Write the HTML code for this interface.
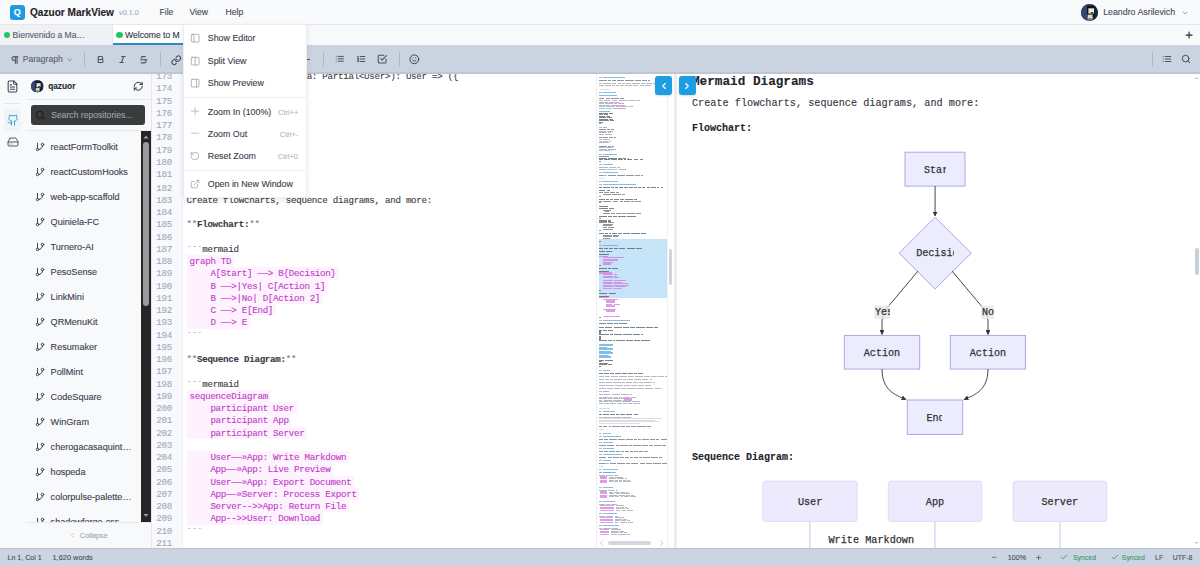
<!DOCTYPE html>
<html><head><meta charset="utf-8">
<style>
*{margin:0;padding:0;box-sizing:border-box}
html,body{width:1200px;height:566px;overflow:hidden;background:#fff;font-family:"Liberation Sans",sans-serif;position:relative}
.a{position:absolute}
.t{position:absolute;line-height:0;white-space:pre;-webkit-text-stroke:0.12px currentColor}
svg{position:absolute;overflow:visible}
</style></head><body>
<div class="a" style="left:0px;top:0px;width:1200px;height:24px;background:#f9fafb;"></div>
<div class="a" style="left:0px;top:24px;width:1200px;height:1px;background:#e5e7eb;"></div>
<div class="a" style="left:0px;top:25px;width:1200px;height:19.8px;background:#f8f9fb;"></div>
<div class="a" style="left:0px;top:25px;width:112px;height:19.8px;background:#eff1f5;"></div>
<div class="a" style="left:112px;top:25px;width:0.8px;height:19.8px;background:#e2e5ea;"></div>
<div class="a" style="left:112.8px;top:25px;width:71px;height:19.8px;background:#ffffff;"></div>
<div class="a" style="left:112.8px;top:43.3px;width:71px;height:1.7px;background:#2a8acb;"></div>
<div class="a" style="left:0px;top:45px;width:1200px;height:27.5px;background:#cad3df;"></div>
<div class="a" style="left:0px;top:72px;width:1200px;height:1.8px;background:#bdc7d3;"></div>
<div class="a" style="left:0px;top:73.8px;width:25.5px;height:474.2px;background:#f8f9fb;"></div>
<div class="a" style="left:25.5px;top:73.8px;width:0.8px;height:474.2px;background:#e5e7eb;"></div>
<div class="a" style="left:26.3px;top:73.8px;width:124.5px;height:474.2px;background:#f8f9fb;"></div>
<div class="a" style="left:150.8px;top:73.8px;width:0.8px;height:474.2px;background:#e3e6ea;"></div>
<div class="a" style="left:151.6px;top:73.8px;width:30.2px;height:474.2px;background:#f8f9fc;"></div>
<div class="a" style="left:181.8px;top:73.8px;width:0.8px;height:474.2px;background:#eef0f3;"></div>
<div class="a" style="left:182.6px;top:73.8px;width:413.4px;height:474.2px;background:#ffffff;"></div>
<div class="a" style="left:596px;top:73.8px;width:78px;height:474.2px;background:#ffffff;"></div>
<div class="a" style="left:596px;top:73.8px;width:0.8px;height:474.2px;background:#eceef2;"></div>
<div class="a" style="left:674px;top:73.8px;width:3px;height:474.2px;background:#e9ecf1;"></div>
<div class="a" style="left:677px;top:73.8px;width:523px;height:474.2px;background:#ffffff;"></div>
<div class="a" style="left:0px;top:548px;width:1200px;height:18px;background:#cbd5e1;"></div>
<div class="a" style="left:0px;top:547.6px;width:1200px;height:0.8px;background:#b8c3d1;"></div>
<div class="a" style="left:10px;top:5px;width:15px;height:15px;background:#1d9be2;border-radius:3px"></div>
<div class="t" style="left:13.8px;top:12.4px;font-size:9px;color:#ffffff;font-weight:bold;">Q</div>
<div class="t" style="left:30px;top:12.9px;font-size:10.1px;color:#1f2328;font-weight:bold;">Qazuor MarkView</div>
<div class="t" style="left:119px;top:13.2px;font-size:7.3px;color:#a9aeb6;">v0.1.0</div>
<div class="t" style="left:159.5px;top:12.2px;font-size:8.6px;color:#454b55;">File</div>
<div class="t" style="left:189.5px;top:12.2px;font-size:8.6px;color:#454b55;">View</div>
<div class="t" style="left:225.5px;top:12.2px;font-size:8.6px;color:#454b55;">Help</div>
<svg style="left:1081px;top:3.8px" width="17" height="17" viewBox="0 0 17 17"><defs><clipPath id="avch"><circle cx="8.5" cy="8.5" r="8.5"/></clipPath></defs><g clip-path="url(#avch)"><rect width="17" height="17" fill="#27365a"/><rect x="0" y="0" width="6" height="17" fill="#34456e"/><rect x="11" y="0" width="6" height="17" fill="#1c2744"/><rect x="6" y="2" width="7.5" height="11" fill="#0e1220"/><rect x="7.4" y="4.3" width="5.6" height="5.2" fill="#efe9d2"/><rect x="9.8" y="8" width="2.4" height="2.6" fill="#504a48"/><rect x="6.6" y="10.6" width="5" height="4.8" fill="#ddd9c0"/><rect x="7.5" y="14" width="3" height="3" fill="#6c7a8c"/></g></svg>
<div class="t" style="left:1103.2px;top:12.2px;font-size:8.8px;color:#454b55;">Leandro Asrilevich</div>
<svg style="left:1181px;top:8.5px;" width="8" height="8" viewBox="0 0 24 24" fill="none" stroke="#6b7280" stroke-width="2" stroke-linecap="round" stroke-linejoin="round"><path d="m6 9 6 6 6-6"/></svg>
<div class="a" style="left:3.7px;top:31.8px;width:6.4px;height:6.4px;background:#22c55e;border-radius:50%"></div>
<div class="t" style="left:12.5px;top:35px;font-size:8.6px;color:#5a606b;">Bienvenido a Ma…</div>
<div class="a" style="left:116px;top:31.8px;width:6.6px;height:6.4px;background:#22c55e;border-radius:50%"></div>
<div class="t" style="left:125px;top:35px;font-size:8.6px;color:#2f3540;">Welcome to M</div>
<svg style="left:1183.8px;top:29.8px;" width="10.2" height="10.2" viewBox="0 0 24 24" fill="none" stroke="#1f2937" stroke-width="2.6" stroke-linecap="round" stroke-linejoin="round"><path d="M5 12h14"/><path d="M12 5v14"/></svg>
<svg style="left:10.3px;top:54.5px;" width="10" height="10" viewBox="0 0 24 24" fill="none" stroke="#5a6270" stroke-width="3" stroke-linecap="round" stroke-linejoin="round"><path d="M13 4v16"/><path d="M17 4v16"/><path d="M19 4H9.5a4.5 4.5 0 0 0 0 9H13"/></svg>
<div class="t" style="left:22.7px;top:59.2px;font-size:8.6px;color:#5a6270;">Paragraph</div>
<svg style="left:66px;top:55.5px;" width="7.5" height="7.5" viewBox="0 0 24 24" fill="none" stroke="#5a6270" stroke-width="2.2" stroke-linecap="round" stroke-linejoin="round"><path d="m6 9 6 6 6-6"/></svg>
<div class="a" style="left:84.3px;top:52.2px;width:0.9px;height:14.5px;background:#aeb7c3;"></div>
<svg style="left:96.1px;top:55.1px;" width="9" height="9" viewBox="0 0 24 24" fill="none" stroke="#4b5362" stroke-width="2.9" stroke-linecap="round" stroke-linejoin="round"><path d="M6 12h9a4 4 0 0 1 0 8H7a1 1 0 0 1-1-1V5a1 1 0 0 1 1-1h7a4 4 0 0 1 0 8"/></svg>
<svg style="left:117.5px;top:55.1px;" width="9" height="9" viewBox="0 0 24 24" fill="none" stroke="#4b5362" stroke-width="2.9" stroke-linecap="round" stroke-linejoin="round"><line x1="19" x2="10" y1="4" y2="4"/><line x1="14" x2="5" y1="20" y2="20"/><line x1="15" x2="9" y1="4" y2="20"/></svg>
<svg style="left:138.8px;top:55px;" width="9.5" height="9.5" viewBox="0 0 24 24" fill="none" stroke="#4b5362" stroke-width="2.8" stroke-linecap="round" stroke-linejoin="round"><path d="M16 4H9a3 3 0 0 0-2.83 4"/><path d="M14 12a4 4 0 0 1 0 8H6"/><line x1="4" x2="20" y1="12" y2="12"/></svg>
<div class="a" style="left:160px;top:52.2px;width:0.9px;height:14.5px;background:#aeb7c3;"></div>
<svg style="left:170.5px;top:54.6px;" width="10.5" height="10.5" viewBox="0 0 24 24" fill="none" stroke="#4b5362" stroke-width="2.5" stroke-linecap="round" stroke-linejoin="round"><path d="M10 13a5 5 0 0 0 7.54.54l3-3a5 5 0 0 0-7.07-7.07l-1.72 1.71"/><path d="M14 11a5 5 0 0 0-7.54-.54l-3 3a5 5 0 0 0 7.07 7.07l1.71-1.71"/></svg>
<div class="a" style="left:306.5px;top:58.6px;width:3.5px;height:1.1px;background:#4b5362;"></div>
<div class="a" style="left:323px;top:52.2px;width:0.9px;height:14.5px;background:#aeb7c3;"></div>
<svg style="left:335.2px;top:53.8px;" width="9.6" height="9.6" viewBox="0 0 24 24" fill="none" stroke="#4b5362" stroke-width="2.5" stroke-linecap="round" stroke-linejoin="round"><path d="M3 12h.01"/><path d="M3 18h.01"/><path d="M3 6h.01"/><path d="M8 12h13"/><path d="M8 18h13"/><path d="M8 6h13"/></svg>
<svg style="left:356px;top:53.6px;" width="10" height="10" viewBox="0 0 24 24" fill="none" stroke="#4b5362" stroke-width="2.5" stroke-linecap="round" stroke-linejoin="round"><path d="M10 12h11"/><path d="M10 18h11"/><path d="M10 6h11"/><path d="M4 10h2"/><path d="M4 6h1v4"/><path d="M6 18H4c0-1 2-2 2-3s-1-1.5-2-1"/></svg>
<svg style="left:377.1px;top:54.4px;" width="10.3" height="10.3" viewBox="0 0 24 24" fill="none" stroke="#4b5362" stroke-width="2.5" stroke-linecap="round" stroke-linejoin="round"><path d="m9 11 3 3L22 4"/><path d="M21 12v7a2 2 0 0 1-2 2H5a2 2 0 0 1-2-2V5a2 2 0 0 1 2-2h11"/></svg>
<div class="a" style="left:399px;top:52.2px;width:0.9px;height:14.5px;background:#aeb7c3;"></div>
<svg style="left:408.9px;top:54.2px;" width="10.6" height="10.6" viewBox="0 0 24 24" fill="none" stroke="#374151" stroke-width="2.2" stroke-linecap="round" stroke-linejoin="round"><circle cx="12" cy="12" r="10"/><path d="M8 14s1.5 2 4 2 4-2 4-2"/><line x1="9" x2="9.01" y1="9" y2="9"/><line x1="15" x2="15.01" y1="9" y2="9"/></svg>
<div class="a" style="left:1151.6px;top:52.2px;width:0.9px;height:15px;background:#aeb7c3;"></div>
<svg style="left:1162.2px;top:54.4px;" width="10" height="10" viewBox="0 0 24 24" fill="none" stroke="#4b5362" stroke-width="2.5" stroke-linecap="round" stroke-linejoin="round"><path d="M3 12h.01"/><path d="M3 18h.01"/><path d="M3 6h.01"/><path d="M8 12h13"/><path d="M8 18h13"/><path d="M8 6h13"/></svg>
<svg style="left:1181.2px;top:54.1px;" width="10" height="10" viewBox="0 0 24 24" fill="none" stroke="#374151" stroke-width="2.2" stroke-linecap="round" stroke-linejoin="round"><circle cx="11" cy="11" r="8"/><path d="m21 21-4.3-4.3"/></svg>
<svg style="left:5.8px;top:79.9px;" width="13" height="13" viewBox="0 0 24 24" fill="none" stroke="#374151" stroke-width="1.9" stroke-linecap="round" stroke-linejoin="round"><path d="M15 2H6a2 2 0 0 0-2 2v16a2 2 0 0 0 2 2h12a2 2 0 0 0 2-2V7Z"/><path d="M14 2v4a2 2 0 0 0 2 2h4"/><path d="M10 9H8"/><path d="M16 13H8"/><path d="M16 17H8"/></svg>
<div class="a" style="left:4.2px;top:103.3px;width:15.6px;height:0.8px;background:#e3e6ea;"></div>
<div class="a" style="left:3.5px;top:108.6px;width:17.7px;height:22px;background:#f1f3f6;border-radius:4px"></div>
<svg style="left:7.3px;top:113.5px;" width="12" height="12" viewBox="0 0 24 24" fill="none" stroke="#1d9be2" stroke-width="1.9" stroke-linecap="round" stroke-linejoin="round"><path d="M15 22v-4a4.8 4.8 0 0 0-1-3.5c3 0 6-2 6-5.5.08-1.25-.27-2.48-1-3.5.28-1.15.28-2.35 0-3.5 0 0-1 0-3 1.5-2.64-.5-5.36-.5-8 0C6 2 5 2 5 2c-.3 1.15-.3 2.35 0 3.5A5.403 5.403 0 0 0 4 9c0 3.5 3 5.5 6 5.5-.39.49-.68 1.05-.85 1.65-.17.6-.22 1.23-.15 1.85v4"/><path d="M9 18c-4.51 2-5-2-7-2"/></svg>
<svg style="left:6.5px;top:135.5px;" width="12" height="12" viewBox="0 0 24 24" fill="none" stroke="#374151" stroke-width="1.7" stroke-linecap="round" stroke-linejoin="round"><line x1="22" x2="2" y1="12" y2="12"/><path d="M5.45 5.11 2 12v6a2 2 0 0 0 2 2h16a2 2 0 0 0 2-2v-6l-3.45-6.89A2 2 0 0 0 16.76 4H7.24a2 2 0 0 0-1.79 1.11z"/><line x1="6" x2="6.01" y1="16" y2="16"/><line x1="10" x2="10.01" y1="16" y2="16"/></svg>
<svg style="left:30.5px;top:79.9px" width="12.5" height="12.5" viewBox="0 0 17 17"><defs><clipPath id="avcs"><circle cx="8.5" cy="8.5" r="8.5"/></clipPath></defs><g clip-path="url(#avcs)"><rect width="17" height="17" fill="#27365a"/><rect x="0" y="0" width="6" height="17" fill="#34456e"/><rect x="11" y="0" width="6" height="17" fill="#1c2744"/><rect x="6" y="2" width="7.5" height="11" fill="#0e1220"/><rect x="7.4" y="4.3" width="5.6" height="5.2" fill="#efe9d2"/><rect x="9.8" y="8" width="2.4" height="2.6" fill="#504a48"/><rect x="6.6" y="10.6" width="5" height="4.8" fill="#ddd9c0"/><rect x="7.5" y="14" width="3" height="3" fill="#6c7a8c"/></g></svg>
<div class="t" style="left:48.2px;top:86px;font-size:8.3px;color:#1f2937;font-weight:bold;">qazuor</div>
<svg style="left:132.7px;top:81.1px;" width="10.5" height="10.5" viewBox="0 0 24 24" fill="none" stroke="#1f2937" stroke-width="2.2" stroke-linecap="round" stroke-linejoin="round"><path d="M3 12a9 9 0 0 1 9-9 9.75 9.75 0 0 1 6.74 2.74L21 8"/><path d="M21 3v5h-5"/><path d="M21 12a9 9 0 0 1-9 9 9.75 9.75 0 0 1-6.74-2.74L3 16"/><path d="M8 16H3v5"/></svg>
<div class="a" style="left:26.3px;top:98.6px;width:124.5px;height:0.8px;background:#e6e8ec;"></div>
<div class="a" style="left:31.3px;top:105px;width:113.7px;height:19.9px;background:#3a3b3d;border-radius:3px"></div>
<svg style="left:34.95px;top:109.8px;" width="10.4" height="10.4" viewBox="0 0 24 24" fill="none" stroke="#1f1f1f" stroke-width="2.4" stroke-linecap="round" stroke-linejoin="round"><circle cx="11" cy="11" r="8"/><path d="m21 21-4.3-4.3"/></svg>
<div class="t" style="left:51.2px;top:115.3px;font-size:8.6px;color:#9ea2a8;">Search repositories...</div>
<div class="a" style="left:26.3px;top:130.2px;width:124.5px;height:0.8px;background:#e6e8ec;"></div>
<div class="a" style="left:26.3px;top:131px;width:124.5px;height:391.5px;overflow:hidden"><div class="a" style="left:-26.3px;top:-131px;width:1200px;height:600px"><svg style="left:35.3px;top:142.35px;" width="10" height="10" viewBox="0 0 24 24" fill="none" stroke="#374151" stroke-width="2.3" stroke-linecap="round" stroke-linejoin="round"><line x1="6" x2="6" y1="3" y2="15"/><circle cx="18" cy="6" r="3"/><circle cx="6" cy="18" r="3"/><path d="M18 9a9 9 0 0 1-9 9"/></svg>
<div class="t" style="left:50.6px;top:147.3px;font-size:9.1px;color:#3a414d;">reactFormToolkit</div>
<svg style="left:35.3px;top:167.35px;" width="10" height="10" viewBox="0 0 24 24" fill="none" stroke="#374151" stroke-width="2.3" stroke-linecap="round" stroke-linejoin="round"><line x1="6" x2="6" y1="3" y2="15"/><circle cx="18" cy="6" r="3"/><circle cx="6" cy="18" r="3"/><path d="M18 9a9 9 0 0 1-9 9"/></svg>
<div class="t" style="left:50.6px;top:172.3px;font-size:9.1px;color:#3a414d;">reactCustomHooks</div>
<svg style="left:35.3px;top:192.35px;" width="10" height="10" viewBox="0 0 24 24" fill="none" stroke="#374151" stroke-width="2.3" stroke-linecap="round" stroke-linejoin="round"><line x1="6" x2="6" y1="3" y2="15"/><circle cx="18" cy="6" r="3"/><circle cx="6" cy="18" r="3"/><path d="M18 9a9 9 0 0 1-9 9"/></svg>
<div class="t" style="left:50.6px;top:197.3px;font-size:9.1px;color:#3a414d;">web-app-scaffold</div>
<svg style="left:35.3px;top:217.35px;" width="10" height="10" viewBox="0 0 24 24" fill="none" stroke="#374151" stroke-width="2.3" stroke-linecap="round" stroke-linejoin="round"><line x1="6" x2="6" y1="3" y2="15"/><circle cx="18" cy="6" r="3"/><circle cx="6" cy="18" r="3"/><path d="M18 9a9 9 0 0 1-9 9"/></svg>
<div class="t" style="left:50.6px;top:222.3px;font-size:9.1px;color:#3a414d;">Quiniela-FC</div>
<svg style="left:35.3px;top:242.35px;" width="10" height="10" viewBox="0 0 24 24" fill="none" stroke="#374151" stroke-width="2.3" stroke-linecap="round" stroke-linejoin="round"><line x1="6" x2="6" y1="3" y2="15"/><circle cx="18" cy="6" r="3"/><circle cx="6" cy="18" r="3"/><path d="M18 9a9 9 0 0 1-9 9"/></svg>
<div class="t" style="left:50.6px;top:247.3px;font-size:9.1px;color:#3a414d;">Turnero-AI</div>
<svg style="left:35.3px;top:267.35px;" width="10" height="10" viewBox="0 0 24 24" fill="none" stroke="#374151" stroke-width="2.3" stroke-linecap="round" stroke-linejoin="round"><line x1="6" x2="6" y1="3" y2="15"/><circle cx="18" cy="6" r="3"/><circle cx="6" cy="18" r="3"/><path d="M18 9a9 9 0 0 1-9 9"/></svg>
<div class="t" style="left:50.6px;top:272.3px;font-size:9.1px;color:#3a414d;">PesoSense</div>
<svg style="left:35.3px;top:292.35px;" width="10" height="10" viewBox="0 0 24 24" fill="none" stroke="#374151" stroke-width="2.3" stroke-linecap="round" stroke-linejoin="round"><line x1="6" x2="6" y1="3" y2="15"/><circle cx="18" cy="6" r="3"/><circle cx="6" cy="18" r="3"/><path d="M18 9a9 9 0 0 1-9 9"/></svg>
<div class="t" style="left:50.6px;top:297.3px;font-size:9.1px;color:#3a414d;">LinkMini</div>
<svg style="left:35.3px;top:317.35px;" width="10" height="10" viewBox="0 0 24 24" fill="none" stroke="#374151" stroke-width="2.3" stroke-linecap="round" stroke-linejoin="round"><line x1="6" x2="6" y1="3" y2="15"/><circle cx="18" cy="6" r="3"/><circle cx="6" cy="18" r="3"/><path d="M18 9a9 9 0 0 1-9 9"/></svg>
<div class="t" style="left:50.6px;top:322.3px;font-size:9.1px;color:#3a414d;">QRMenuKit</div>
<svg style="left:35.3px;top:342.35px;" width="10" height="10" viewBox="0 0 24 24" fill="none" stroke="#374151" stroke-width="2.3" stroke-linecap="round" stroke-linejoin="round"><line x1="6" x2="6" y1="3" y2="15"/><circle cx="18" cy="6" r="3"/><circle cx="6" cy="18" r="3"/><path d="M18 9a9 9 0 0 1-9 9"/></svg>
<div class="t" style="left:50.6px;top:347.3px;font-size:9.1px;color:#3a414d;">Resumaker</div>
<svg style="left:35.3px;top:367.35px;" width="10" height="10" viewBox="0 0 24 24" fill="none" stroke="#374151" stroke-width="2.3" stroke-linecap="round" stroke-linejoin="round"><line x1="6" x2="6" y1="3" y2="15"/><circle cx="18" cy="6" r="3"/><circle cx="6" cy="18" r="3"/><path d="M18 9a9 9 0 0 1-9 9"/></svg>
<div class="t" style="left:50.6px;top:372.3px;font-size:9.1px;color:#3a414d;">PollMint</div>
<svg style="left:35.3px;top:392.35px;" width="10" height="10" viewBox="0 0 24 24" fill="none" stroke="#374151" stroke-width="2.3" stroke-linecap="round" stroke-linejoin="round"><line x1="6" x2="6" y1="3" y2="15"/><circle cx="18" cy="6" r="3"/><circle cx="6" cy="18" r="3"/><path d="M18 9a9 9 0 0 1-9 9"/></svg>
<div class="t" style="left:50.6px;top:397.3px;font-size:9.1px;color:#3a414d;">CodeSquare</div>
<svg style="left:35.3px;top:417.35px;" width="10" height="10" viewBox="0 0 24 24" fill="none" stroke="#374151" stroke-width="2.3" stroke-linecap="round" stroke-linejoin="round"><line x1="6" x2="6" y1="3" y2="15"/><circle cx="18" cy="6" r="3"/><circle cx="6" cy="18" r="3"/><path d="M18 9a9 9 0 0 1-9 9"/></svg>
<div class="t" style="left:50.6px;top:422.3px;font-size:9.1px;color:#3a414d;">WinGram</div>
<svg style="left:35.3px;top:442.35px;" width="10" height="10" viewBox="0 0 24 24" fill="none" stroke="#374151" stroke-width="2.3" stroke-linecap="round" stroke-linejoin="round"><line x1="6" x2="6" y1="3" y2="15"/><circle cx="18" cy="6" r="3"/><circle cx="6" cy="18" r="3"/><path d="M18 9a9 9 0 0 1-9 9"/></svg>
<div class="t" style="left:50.6px;top:447.3px;font-size:9.1px;color:#3a414d;">cherogacasaquint…</div>
<svg style="left:35.3px;top:467.35px;" width="10" height="10" viewBox="0 0 24 24" fill="none" stroke="#374151" stroke-width="2.3" stroke-linecap="round" stroke-linejoin="round"><line x1="6" x2="6" y1="3" y2="15"/><circle cx="18" cy="6" r="3"/><circle cx="6" cy="18" r="3"/><path d="M18 9a9 9 0 0 1-9 9"/></svg>
<div class="t" style="left:50.6px;top:472.3px;font-size:9.1px;color:#3a414d;">hospeda</div>
<svg style="left:35.3px;top:492.35px;" width="10" height="10" viewBox="0 0 24 24" fill="none" stroke="#374151" stroke-width="2.3" stroke-linecap="round" stroke-linejoin="round"><line x1="6" x2="6" y1="3" y2="15"/><circle cx="18" cy="6" r="3"/><circle cx="6" cy="18" r="3"/><path d="M18 9a9 9 0 0 1-9 9"/></svg>
<div class="t" style="left:50.6px;top:497.3px;font-size:9.1px;color:#3a414d;">colorpulse-palette…</div>
<svg style="left:35.3px;top:517.35px;" width="10" height="10" viewBox="0 0 24 24" fill="none" stroke="#374151" stroke-width="2.3" stroke-linecap="round" stroke-linejoin="round"><line x1="6" x2="6" y1="3" y2="15"/><circle cx="18" cy="6" r="3"/><circle cx="6" cy="18" r="3"/><path d="M18 9a9 9 0 0 1-9 9"/></svg>
<div class="t" style="left:50.6px;top:522.3px;font-size:9.1px;color:#3a414d;">shadowforge-css</div>
</div></div>
<div class="a" style="left:141px;top:131.3px;width:9.75px;height:390.4px;background:#262626;"></div>
<svg style="left:141px;top:131.3px" width="10" height="390" viewBox="0 0 10 390"><path d="M2.6 7.4 L5 4.6 L7.4 7.4Z" fill="#a8a8a8"/><path d="M2.6 383 L5 385.8 L7.4 383Z" fill="#a8a8a8"/></svg>
<div class="a" style="left:142.6px;top:142px;width:6.6px;height:164px;background:#9b9b9b;border-radius:3.3px"></div>
<div class="a" style="left:26.3px;top:522.2px;width:124.5px;height:0.8px;background:#e6e8ec;"></div>
<svg style="left:69.2px;top:531.8px;" width="7" height="7" viewBox="0 0 24 24" fill="none" stroke="#a3a8b0" stroke-width="2.2" stroke-linecap="round" stroke-linejoin="round"><path d="m15 18-6-6 6-6"/></svg>
<div class="t" style="left:79.7px;top:535.6px;font-size:7.2px;color:#a3a8b0;">Collapse</div>
<div class="a" style="left:0;top:73.8px;width:1200px;height:474.2px;overflow:hidden"><div class="a" style="left:0;top:-73.8px;width:1200px;height:566px"><div class="t" style="left:156.3px;top:77.1px;font-size:9.2px;color:#a4a9b8;font-family:'Liberation Mono',monospace;letter-spacing:-0.29px;">173</div>
<div class="t" style="left:156.3px;top:89.35px;font-size:9.2px;color:#a4a9b8;font-family:'Liberation Mono',monospace;letter-spacing:-0.29px;">174</div>
<div class="t" style="left:156.3px;top:101.6px;font-size:9.2px;color:#a4a9b8;font-family:'Liberation Mono',monospace;letter-spacing:-0.29px;">175</div>
<div class="t" style="left:156.3px;top:113.85px;font-size:9.2px;color:#a4a9b8;font-family:'Liberation Mono',monospace;letter-spacing:-0.29px;">176</div>
<div class="t" style="left:156.3px;top:126.1px;font-size:9.2px;color:#a4a9b8;font-family:'Liberation Mono',monospace;letter-spacing:-0.29px;">177</div>
<div class="t" style="left:156.3px;top:138.35px;font-size:9.2px;color:#a4a9b8;font-family:'Liberation Mono',monospace;letter-spacing:-0.29px;">178</div>
<div class="t" style="left:156.3px;top:150.6px;font-size:9.2px;color:#a4a9b8;font-family:'Liberation Mono',monospace;letter-spacing:-0.29px;">179</div>
<div class="t" style="left:156.3px;top:162.85px;font-size:9.2px;color:#a4a9b8;font-family:'Liberation Mono',monospace;letter-spacing:-0.29px;">180</div>
<div class="t" style="left:156.3px;top:175.1px;font-size:9.2px;color:#a4a9b8;font-family:'Liberation Mono',monospace;letter-spacing:-0.29px;">181</div>
<div class="t" style="left:156.3px;top:188.7px;font-size:9.2px;color:#a4a9b8;font-family:'Liberation Mono',monospace;letter-spacing:-0.29px;">182</div>
<div class="t" style="left:156.3px;top:200.95px;font-size:9.2px;color:#a4a9b8;font-family:'Liberation Mono',monospace;letter-spacing:-0.29px;">183</div>
<div class="t" style="left:156.3px;top:213.2px;font-size:9.2px;color:#a4a9b8;font-family:'Liberation Mono',monospace;letter-spacing:-0.29px;">184</div>
<div class="t" style="left:156.3px;top:225.45px;font-size:9.2px;color:#a4a9b8;font-family:'Liberation Mono',monospace;letter-spacing:-0.29px;">185</div>
<div class="t" style="left:156.3px;top:237.7px;font-size:9.2px;color:#a4a9b8;font-family:'Liberation Mono',monospace;letter-spacing:-0.29px;">186</div>
<div class="t" style="left:156.3px;top:249.95px;font-size:9.2px;color:#a4a9b8;font-family:'Liberation Mono',monospace;letter-spacing:-0.29px;">187</div>
<div class="t" style="left:156.3px;top:262.2px;font-size:9.2px;color:#a4a9b8;font-family:'Liberation Mono',monospace;letter-spacing:-0.29px;">188</div>
<div class="t" style="left:156.3px;top:274.45px;font-size:9.2px;color:#a4a9b8;font-family:'Liberation Mono',monospace;letter-spacing:-0.29px;">189</div>
<div class="t" style="left:156.3px;top:286.7px;font-size:9.2px;color:#a4a9b8;font-family:'Liberation Mono',monospace;letter-spacing:-0.29px;">190</div>
<div class="t" style="left:156.3px;top:298.95px;font-size:9.2px;color:#a4a9b8;font-family:'Liberation Mono',monospace;letter-spacing:-0.29px;">191</div>
<div class="t" style="left:156.3px;top:311.2px;font-size:9.2px;color:#a4a9b8;font-family:'Liberation Mono',monospace;letter-spacing:-0.29px;">192</div>
<div class="t" style="left:156.3px;top:323.45px;font-size:9.2px;color:#a4a9b8;font-family:'Liberation Mono',monospace;letter-spacing:-0.29px;">193</div>
<div class="t" style="left:156.3px;top:335.7px;font-size:9.2px;color:#a4a9b8;font-family:'Liberation Mono',monospace;letter-spacing:-0.29px;">194</div>
<div class="t" style="left:156.3px;top:347.95px;font-size:9.2px;color:#a4a9b8;font-family:'Liberation Mono',monospace;letter-spacing:-0.29px;">195</div>
<div class="t" style="left:156.3px;top:360.2px;font-size:9.2px;color:#a4a9b8;font-family:'Liberation Mono',monospace;letter-spacing:-0.29px;">196</div>
<div class="t" style="left:156.3px;top:372.45px;font-size:9.2px;color:#a4a9b8;font-family:'Liberation Mono',monospace;letter-spacing:-0.29px;">197</div>
<div class="t" style="left:156.3px;top:384.7px;font-size:9.2px;color:#a4a9b8;font-family:'Liberation Mono',monospace;letter-spacing:-0.29px;">198</div>
<div class="t" style="left:156.3px;top:396.95px;font-size:9.2px;color:#a4a9b8;font-family:'Liberation Mono',monospace;letter-spacing:-0.29px;">199</div>
<div class="t" style="left:156.3px;top:409.2px;font-size:9.2px;color:#a4a9b8;font-family:'Liberation Mono',monospace;letter-spacing:-0.29px;">200</div>
<div class="t" style="left:156.3px;top:421.45px;font-size:9.2px;color:#a4a9b8;font-family:'Liberation Mono',monospace;letter-spacing:-0.29px;">201</div>
<div class="t" style="left:156.3px;top:433.7px;font-size:9.2px;color:#a4a9b8;font-family:'Liberation Mono',monospace;letter-spacing:-0.29px;">202</div>
<div class="t" style="left:156.3px;top:445.95px;font-size:9.2px;color:#a4a9b8;font-family:'Liberation Mono',monospace;letter-spacing:-0.29px;">203</div>
<div class="t" style="left:156.3px;top:458.2px;font-size:9.2px;color:#a4a9b8;font-family:'Liberation Mono',monospace;letter-spacing:-0.29px;">204</div>
<div class="t" style="left:156.3px;top:470.45px;font-size:9.2px;color:#a4a9b8;font-family:'Liberation Mono',monospace;letter-spacing:-0.29px;">205</div>
<div class="t" style="left:156.3px;top:482.7px;font-size:9.2px;color:#a4a9b8;font-family:'Liberation Mono',monospace;letter-spacing:-0.29px;">206</div>
<div class="t" style="left:156.3px;top:494.95px;font-size:9.2px;color:#a4a9b8;font-family:'Liberation Mono',monospace;letter-spacing:-0.29px;">207</div>
<div class="t" style="left:156.3px;top:507.2px;font-size:9.2px;color:#a4a9b8;font-family:'Liberation Mono',monospace;letter-spacing:-0.29px;">208</div>
<div class="t" style="left:156.3px;top:519.45px;font-size:9.2px;color:#a4a9b8;font-family:'Liberation Mono',monospace;letter-spacing:-0.29px;">209</div>
<div class="t" style="left:156.3px;top:531.7px;font-size:9.2px;color:#a4a9b8;font-family:'Liberation Mono',monospace;letter-spacing:-0.29px;">210</div>
<div class="t" style="left:156.3px;top:543.95px;font-size:9.2px;color:#a4a9b8;font-family:'Liberation Mono',monospace;letter-spacing:-0.29px;">211</div>
<div class="t" style="left:186.5px;top:77.1px;font-size:9.2px;color:#3a3d44;font-family:'Liberation Mono',monospace;letter-spacing:-0.29px;">const updateUser = (data: Partial&lt;User&gt;): User =&gt; ({</div>
<div class="t" style="left:186.5px;top:200.95px;font-size:9.2px;color:#3a3d44;font-family:'Liberation Mono',monospace;letter-spacing:-0.29px;">Create flowcharts, sequence diagrams, and more:</div>
<div class="t" style="left:186.5px;top:225.45px;font-size:9.2px;color:#7d828b;font-family:'Liberation Mono',monospace;letter-spacing:-0.29px;">**</div>
<div class="t" style="left:196.96px;top:225.45px;font-size:9.2px;color:#3a3d44;font-weight:bold;font-family:'Liberation Mono',monospace;letter-spacing:-0.29px;">Flowchart:</div>
<div class="t" style="left:249.26px;top:225.45px;font-size:9.2px;color:#7d828b;font-family:'Liberation Mono',monospace;letter-spacing:-0.29px;">**</div>
<div class="t" style="left:186.5px;top:249.95px;font-size:9.2px;color:#7d828b;font-family:'Liberation Mono',monospace;letter-spacing:-0.29px;">```</div>
<div class="t" style="left:202.19px;top:249.95px;font-size:9.2px;color:#3a3d44;font-family:'Liberation Mono',monospace;letter-spacing:-0.29px;">mermaid</div>
<div class="t" style="left:186.5px;top:335.7px;font-size:9.2px;color:#7d828b;font-family:'Liberation Mono',monospace;letter-spacing:-0.29px;">```</div>
<div class="t" style="left:186.5px;top:360.2px;font-size:9.2px;color:#7d828b;font-family:'Liberation Mono',monospace;letter-spacing:-0.29px;">**</div>
<div class="t" style="left:196.96px;top:360.2px;font-size:9.2px;color:#3a3d44;font-weight:bold;font-family:'Liberation Mono',monospace;letter-spacing:-0.29px;">Sequence Diagram:</div>
<div class="t" style="left:285.87px;top:360.2px;font-size:9.2px;color:#7d828b;font-family:'Liberation Mono',monospace;letter-spacing:-0.29px;">**</div>
<div class="t" style="left:186.5px;top:384.7px;font-size:9.2px;color:#7d828b;font-family:'Liberation Mono',monospace;letter-spacing:-0.29px;">```</div>
<div class="t" style="left:202.19px;top:384.7px;font-size:9.2px;color:#3a3d44;font-family:'Liberation Mono',monospace;letter-spacing:-0.29px;">mermaid</div>
<div class="t" style="left:186.5px;top:531.7px;font-size:9.2px;color:#7d828b;font-family:'Liberation Mono',monospace;letter-spacing:-0.29px;">```</div>
<div class="a" style="left:186.9px;top:255.0px;width:47.04px;height:12.25px;background:#fdf2fd;"></div>
<div class="a" style="left:186.9px;top:267.25px;width:151.64px;height:12.25px;background:#fdf2fd;"></div>
<div class="a" style="left:186.9px;top:279.5px;width:141.18px;height:12.25px;background:#fdf2fd;"></div>
<div class="a" style="left:186.9px;top:291.75px;width:135.95px;height:12.25px;background:#fdf2fd;"></div>
<div class="a" style="left:186.9px;top:304.0px;width:88.88px;height:12.25px;background:#fdf2fd;"></div>
<div class="a" style="left:186.9px;top:316.25px;width:62.73px;height:12.25px;background:#fdf2fd;"></div>
<div class="a" style="left:186.9px;top:389.75px;width:83.65px;height:12.25px;background:#fdf2fd;"></div>
<div class="a" style="left:186.9px;top:402.0px;width:109.8px;height:12.25px;background:#fdf2fd;"></div>
<div class="a" style="left:186.9px;top:414.25px;width:104.57px;height:12.25px;background:#fdf2fd;"></div>
<div class="a" style="left:186.9px;top:426.5px;width:120.26px;height:12.25px;background:#fdf2fd;"></div>
<div class="a" style="left:186.9px;top:451.0px;width:162.1px;height:12.25px;background:#fdf2fd;"></div>
<div class="a" style="left:186.9px;top:463.25px;width:146.41px;height:12.25px;background:#fdf2fd;"></div>
<div class="a" style="left:186.9px;top:475.5px;width:167.33px;height:12.25px;background:#fdf2fd;"></div>
<div class="a" style="left:186.9px;top:487.75px;width:172.56px;height:12.25px;background:#fdf2fd;"></div>
<div class="a" style="left:186.9px;top:500.0px;width:162.1px;height:12.25px;background:#fdf2fd;"></div>
<div class="a" style="left:186.9px;top:512.25px;width:135.95px;height:12.25px;background:#fdf2fd;"></div>
<div class="t" style="left:189.5px;top:262.2px;font-size:9.2px;color:#c040c8;font-family:'Liberation Mono',monospace;letter-spacing:-0.29px;">graph TD</div>
<div class="t" style="left:189.5px;top:274.45px;font-size:9.2px;color:#c040c8;font-family:'Liberation Mono',monospace;letter-spacing:-0.29px;">    A[Start] ——&gt; B{Decision}</div>
<div class="t" style="left:189.5px;top:286.7px;font-size:9.2px;color:#c040c8;font-family:'Liberation Mono',monospace;letter-spacing:-0.29px;">    B ——&gt;|Yes| C[Action 1]</div>
<div class="t" style="left:189.5px;top:298.95px;font-size:9.2px;color:#c040c8;font-family:'Liberation Mono',monospace;letter-spacing:-0.29px;">    B ——&gt;|No| D[Action 2]</div>
<div class="t" style="left:189.5px;top:311.2px;font-size:9.2px;color:#c040c8;font-family:'Liberation Mono',monospace;letter-spacing:-0.29px;">    C ——&gt; E[End]</div>
<div class="t" style="left:189.5px;top:323.45px;font-size:9.2px;color:#c040c8;font-family:'Liberation Mono',monospace;letter-spacing:-0.29px;">    D ——&gt; E</div>
<div class="t" style="left:189.5px;top:396.95px;font-size:9.2px;color:#c040c8;font-family:'Liberation Mono',monospace;letter-spacing:-0.29px;">sequenceDiagram</div>
<div class="t" style="left:189.5px;top:409.2px;font-size:9.2px;color:#c040c8;font-family:'Liberation Mono',monospace;letter-spacing:-0.29px;">    participant User</div>
<div class="t" style="left:189.5px;top:421.45px;font-size:9.2px;color:#c040c8;font-family:'Liberation Mono',monospace;letter-spacing:-0.29px;">    participant App</div>
<div class="t" style="left:189.5px;top:433.7px;font-size:9.2px;color:#c040c8;font-family:'Liberation Mono',monospace;letter-spacing:-0.29px;">    participant Server</div>
<div class="t" style="left:189.5px;top:458.2px;font-size:9.2px;color:#c040c8;font-family:'Liberation Mono',monospace;letter-spacing:-0.29px;">    User——»App: Write Markdown</div>
<div class="t" style="left:189.5px;top:470.45px;font-size:9.2px;color:#c040c8;font-family:'Liberation Mono',monospace;letter-spacing:-0.29px;">    App——»App: Live Preview</div>
<div class="t" style="left:189.5px;top:482.7px;font-size:9.2px;color:#c040c8;font-family:'Liberation Mono',monospace;letter-spacing:-0.29px;">    User——»App: Export Document</div>
<div class="t" style="left:189.5px;top:494.95px;font-size:9.2px;color:#c040c8;font-family:'Liberation Mono',monospace;letter-spacing:-0.29px;">    App——»Server: Process Export</div>
<div class="t" style="left:189.5px;top:507.2px;font-size:9.2px;color:#c040c8;font-family:'Liberation Mono',monospace;letter-spacing:-0.29px;">    Server--&gt;&gt;App: Return File</div>
<div class="t" style="left:189.5px;top:519.45px;font-size:9.2px;color:#c040c8;font-family:'Liberation Mono',monospace;letter-spacing:-0.29px;">    App--&gt;&gt;User: Download</div>
</div></div>
<div class="a" style="left:599px;top:238.6px;width:68px;height:59px;background:#c6e4f7;"></div>
<div class="a" style="left:0;top:73.8px;width:1200px;height:474.2px;overflow:hidden"><div class="a" style="left:0;top:-73.8px;width:1200px;height:566px;filter:blur(0.3px)"><div class="a" style="left:599.00px;top:73.00px;width:4.60px;height:1.2px;background:#6e737b;opacity:.75"></div><div class="a" style="left:604.70px;top:73.00px;width:3.48px;height:1.2px;background:#6e737b;opacity:.75"></div><div class="a" style="left:609.29px;top:73.00px;width:6.73px;height:1.2px;background:#6e737b;opacity:.75"></div><div class="a" style="left:617.12px;top:73.00px;width:2.97px;height:1.2px;background:#6e737b;opacity:.75"></div><div class="a" style="left:621.19px;top:73.00px;width:5.98px;height:1.2px;background:#6e737b;opacity:.75"></div><div class="a" style="left:628.27px;top:73.00px;width:4.88px;height:1.2px;background:#6e737b;opacity:.75"></div><div class="a" style="left:634.25px;top:73.00px;width:2.88px;height:1.2px;background:#6e737b;opacity:.75"></div><div class="a" style="left:638.22px;top:73.00px;width:5.80px;height:1.2px;background:#6e737b;opacity:.75"></div><div class="a" style="left:645.12px;top:73.00px;width:2.74px;height:1.2px;background:#6e737b;opacity:.75"></div><div class="a" style="left:648.97px;top:73.00px;width:5.32px;height:1.2px;background:#6e737b;opacity:.75"></div><div class="a" style="left:655.39px;top:73.00px;width:2.95px;height:1.2px;background:#6e737b;opacity:.75"></div><div class="a" style="left:659.44px;top:73.00px;width:3.09px;height:1.2px;background:#6e737b;opacity:.75"></div><div class="a" style="left:663.63px;top:73.00px;width:3.37px;height:1.2px;background:#6e737b;opacity:.75"></div><div class="a" style="left:599.0px;top:77.00px;width:3.0px;height:1.0px;background:#9da2aa;opacity:.75"></div><div class="a" style="left:603.0px;top:77.00px;width:22.0px;height:1.0px;background:#5aa8dc;opacity:.75"></div><div class="a" style="left:599.00px;top:80.00px;width:7.87px;height:1.0px;background:#6e737b;opacity:.75"></div><div class="a" style="left:607.97px;top:80.00px;width:3.30px;height:1.0px;background:#6e737b;opacity:.75"></div><div class="a" style="left:612.38px;top:80.00px;width:3.95px;height:1.0px;background:#6e737b;opacity:.75"></div><div class="a" style="left:617.43px;top:80.00px;width:6.58px;height:1.0px;background:#6e737b;opacity:.75"></div><div class="a" style="left:625.11px;top:80.00px;width:8.66px;height:1.0px;background:#6e737b;opacity:.75"></div><div class="a" style="left:634.87px;top:80.00px;width:6.25px;height:1.0px;background:#6e737b;opacity:.75"></div><div class="a" style="left:642.22px;top:80.00px;width:5.08px;height:1.0px;background:#6e737b;opacity:.75"></div><div class="a" style="left:648.40px;top:80.00px;width:1.60px;height:1.0px;background:#6e737b;opacity:.75"></div><div class="a" style="left:599.00px;top:83.10px;width:2.80px;height:1.0px;background:#9da2aa;opacity:.75"></div><div class="a" style="left:602.90px;top:83.10px;width:8.08px;height:1.0px;background:#9da2aa;opacity:.75"></div><div class="a" style="left:612.08px;top:83.10px;width:4.38px;height:1.0px;background:#9da2aa;opacity:.75"></div><div class="a" style="left:617.57px;top:83.10px;width:3.44px;height:1.0px;background:#9da2aa;opacity:.75"></div><div class="a" style="left:622.10px;top:83.10px;width:3.27px;height:1.0px;background:#9da2aa;opacity:.75"></div><div class="a" style="left:626.47px;top:83.10px;width:4.51px;height:1.0px;background:#9da2aa;opacity:.75"></div><div class="a" style="left:632.07px;top:83.10px;width:7.80px;height:1.0px;background:#9da2aa;opacity:.75"></div><div class="a" style="left:640.98px;top:83.10px;width:3.67px;height:1.0px;background:#9da2aa;opacity:.75"></div><div class="a" style="left:645.75px;top:83.10px;width:6.28px;height:1.0px;background:#9da2aa;opacity:.75"></div><div class="a" style="left:653.13px;top:83.10px;width:2.87px;height:1.0px;background:#9da2aa;opacity:.75"></div><div class="a" style="left:599.00px;top:84.90px;width:4.92px;height:1.0px;background:#9da2aa;opacity:.75"></div><div class="a" style="left:605.02px;top:84.90px;width:6.06px;height:1.0px;background:#9da2aa;opacity:.75"></div><div class="a" style="left:612.18px;top:84.90px;width:2.91px;height:1.0px;background:#9da2aa;opacity:.75"></div><div class="a" style="left:616.19px;top:84.90px;width:2.89px;height:1.0px;background:#9da2aa;opacity:.75"></div><div class="a" style="left:620.18px;top:84.90px;width:3.84px;height:1.0px;background:#9da2aa;opacity:.75"></div><div class="a" style="left:625.12px;top:84.90px;width:6.92px;height:1.0px;background:#9da2aa;opacity:.75"></div><div class="a" style="left:633.14px;top:84.90px;width:5.28px;height:1.0px;background:#9da2aa;opacity:.75"></div><div class="a" style="left:639.52px;top:84.90px;width:4.54px;height:1.0px;background:#9da2aa;opacity:.75"></div><div class="a" style="left:645.16px;top:84.90px;width:6.31px;height:1.0px;background:#9da2aa;opacity:.75"></div><div class="a" style="left:600.0px;top:89.00px;width:10.0px;height:1.0px;background:#cfd3d9;opacity:.75"></div><div class="a" style="left:599.0px;top:92.10px;width:3.0px;height:1.0px;background:#9da2aa;opacity:.75"></div><div class="a" style="left:603.0px;top:92.10px;width:13.0px;height:1.0px;background:#5aa8dc;opacity:.75"></div><div class="a" style="left:599.0px;top:95.00px;width:18.0px;height:1.0px;background:#5aa8dc;opacity:.75"></div><div class="a" style="left:599.00px;top:98.00px;width:5.45px;height:1.0px;background:#6e737b;opacity:.75"></div><div class="a" style="left:605.55px;top:98.00px;width:4.45px;height:1.0px;background:#6e737b;opacity:.75"></div><div class="a" style="left:611.09px;top:98.00px;width:7.66px;height:1.0px;background:#6e737b;opacity:.75"></div><div class="a" style="left:619.86px;top:98.00px;width:4.14px;height:1.0px;background:#6e737b;opacity:.75"></div><div class="a" style="left:599.00px;top:100.00px;width:4.09px;height:1.0px;background:#9da2aa;opacity:.75"></div><div class="a" style="left:604.19px;top:100.00px;width:6.23px;height:1.0px;background:#9da2aa;opacity:.75"></div><div class="a" style="left:611.52px;top:100.00px;width:5.91px;height:1.0px;background:#9da2aa;opacity:.75"></div><div class="a" style="left:618.53px;top:100.00px;width:8.19px;height:1.0px;background:#9da2aa;opacity:.75"></div><div class="a" style="left:627.82px;top:100.00px;width:7.24px;height:1.0px;background:#9da2aa;opacity:.75"></div><div class="a" style="left:636.16px;top:100.00px;width:3.84px;height:1.0px;background:#9da2aa;opacity:.75"></div><div class="a" style="left:599.00px;top:101.50px;width:8.87px;height:1.0px;background:#9da2aa;opacity:.75"></div><div class="a" style="left:608.97px;top:101.50px;width:2.03px;height:1.0px;background:#9da2aa;opacity:.75"></div><div class="a" style="left:611.0px;top:101.50px;width:8.0px;height:1.0px;background:#d27ae0;opacity:.75"></div><div class="a" style="left:599.00px;top:103.00px;width:5.22px;height:1.0px;background:#9da2aa;opacity:.75"></div><div class="a" style="left:605.32px;top:103.00px;width:7.42px;height:1.0px;background:#9da2aa;opacity:.75"></div><div class="a" style="left:613.84px;top:103.00px;width:3.49px;height:1.0px;background:#9da2aa;opacity:.75"></div><div class="a" style="left:618.43px;top:103.00px;width:5.68px;height:1.0px;background:#9da2aa;opacity:.75"></div><div class="a" style="left:599.00px;top:104.50px;width:2.75px;height:1.0px;background:#9da2aa;opacity:.75"></div><div class="a" style="left:602.85px;top:104.50px;width:6.84px;height:1.0px;background:#9da2aa;opacity:.75"></div><div class="a" style="left:610.80px;top:104.50px;width:6.20px;height:1.0px;background:#9da2aa;opacity:.75"></div><div class="a" style="left:617.0px;top:104.50px;width:8.0px;height:1.0px;background:#d27ae0;opacity:.75"></div><div class="a" style="left:599.00px;top:106.00px;width:6.22px;height:1.0px;background:#9da2aa;opacity:.75"></div><div class="a" style="left:606.32px;top:106.00px;width:8.19px;height:1.0px;background:#9da2aa;opacity:.75"></div><div class="a" style="left:615.62px;top:106.00px;width:4.54px;height:1.0px;background:#9da2aa;opacity:.75"></div><div class="a" style="left:621.25px;top:106.00px;width:7.02px;height:1.0px;background:#9da2aa;opacity:.75"></div><div class="a" style="left:629.37px;top:106.00px;width:3.63px;height:1.0px;background:#9da2aa;opacity:.75"></div><div class="a" style="left:599.00px;top:107.50px;width:6.27px;height:1.0px;background:#9da2aa;opacity:.75"></div><div class="a" style="left:606.37px;top:107.50px;width:5.47px;height:1.0px;background:#9da2aa;opacity:.75"></div><div class="a" style="left:612.93px;top:107.50px;width:5.07px;height:1.0px;background:#9da2aa;opacity:.75"></div><div class="a" style="left:618.0px;top:107.50px;width:8.0px;height:1.0px;background:#d27ae0;opacity:.75"></div><div class="a" style="left:599.0px;top:110.50px;width:11.0px;height:1.0px;background:#5aa8dc;opacity:.75"></div><div class="a" style="left:599.00px;top:112.50px;width:8.64px;height:1.0px;background:#55595f;opacity:.75"></div><div class="a" style="left:608.74px;top:112.50px;width:4.26px;height:1.0px;background:#55595f;opacity:.75"></div><div class="a" style="left:599.0px;top:114.00px;width:4.0px;height:1.0px;background:#55595f;opacity:.75"></div><div class="a" style="left:604.0px;top:114.00px;width:4.0px;height:1.0px;background:#55595f;opacity:.75"></div><div class="a" style="left:599.0px;top:115.50px;width:6.0px;height:1.0px;background:#55595f;opacity:.75"></div><div class="a" style="left:606.0px;top:115.50px;width:4.0px;height:1.0px;background:#55595f;opacity:.75"></div><div class="a" style="left:599.0px;top:117.00px;width:7.0px;height:1.0px;background:#55595f;opacity:.75"></div><div class="a" style="left:607.0px;top:117.00px;width:5.0px;height:1.0px;background:#55595f;opacity:.75"></div><div class="a" style="left:599.0px;top:118.50px;width:9.0px;height:1.0px;background:#55595f;opacity:.75"></div><div class="a" style="left:609.0px;top:118.50px;width:4.0px;height:1.0px;background:#55595f;opacity:.75"></div><div class="a" style="left:599.0px;top:120.00px;width:10.0px;height:1.0px;background:#55595f;opacity:.75"></div><div class="a" style="left:610.0px;top:120.00px;width:4.0px;height:1.0px;background:#55595f;opacity:.75"></div><div class="a" style="left:599.0px;top:121.50px;width:4.0px;height:1.0px;background:#55595f;opacity:.75"></div><div class="a" style="left:599.0px;top:123.00px;width:2.0px;height:1.0px;background:#6e737b;opacity:.75"></div><div class="a" style="left:599.0px;top:126.50px;width:3.0px;height:1.0px;background:#9da2aa;opacity:.75"></div><div class="a" style="left:603.0px;top:126.50px;width:4.0px;height:1.0px;background:#5aa8dc;opacity:.75"></div><div class="a" style="left:599.00px;top:129.00px;width:6.82px;height:1.0px;background:#6e737b;opacity:.75"></div><div class="a" style="left:606.92px;top:129.00px;width:2.89px;height:1.0px;background:#6e737b;opacity:.75"></div><div class="a" style="left:610.91px;top:129.00px;width:3.09px;height:1.0px;background:#6e737b;opacity:.75"></div><div class="a" style="left:599.00px;top:130.50px;width:6.71px;height:1.0px;background:#9da2aa;opacity:.75"></div><div class="a" style="left:606.81px;top:130.50px;width:6.19px;height:1.0px;background:#9da2aa;opacity:.75"></div><div class="a" style="left:599.00px;top:132.10px;width:7.84px;height:1.0px;background:#9da2aa;opacity:.75"></div><div class="a" style="left:607.94px;top:132.10px;width:3.06px;height:1.0px;background:#9da2aa;opacity:.75"></div><div class="a" style="left:599.00px;top:133.70px;width:5.01px;height:1.0px;background:#9da2aa;opacity:.75"></div><div class="a" style="left:605.11px;top:133.70px;width:6.85px;height:1.0px;background:#9da2aa;opacity:.75"></div><div class="a" style="left:599.00px;top:137.30px;width:2.65px;height:1.0px;background:#6e737b;opacity:.75"></div><div class="a" style="left:602.75px;top:137.30px;width:5.50px;height:1.0px;background:#6e737b;opacity:.75"></div><div class="a" style="left:609.35px;top:137.30px;width:3.59px;height:1.0px;background:#6e737b;opacity:.75"></div><div class="a" style="left:614.04px;top:137.30px;width:1.96px;height:1.0px;background:#6e737b;opacity:.75"></div><div class="a" style="left:599.00px;top:139.00px;width:2.88px;height:1.0px;background:#9da2aa;opacity:.75"></div><div class="a" style="left:602.98px;top:139.00px;width:7.49px;height:1.0px;background:#9da2aa;opacity:.75"></div><div class="a" style="left:599.00px;top:140.60px;width:3.34px;height:1.0px;background:#9da2aa;opacity:.75"></div><div class="a" style="left:603.44px;top:140.60px;width:4.11px;height:1.0px;background:#9da2aa;opacity:.75"></div><div class="a" style="left:608.65px;top:140.60px;width:2.35px;height:1.0px;background:#9da2aa;opacity:.75"></div><div class="a" style="left:599.0px;top:142.10px;width:10.0px;height:1.0px;background:#9da2aa;opacity:.75"></div><div class="a" style="left:599.00px;top:145.50px;width:8.16px;height:1.0px;background:#6e737b;opacity:.75"></div><div class="a" style="left:608.26px;top:145.50px;width:3.02px;height:1.0px;background:#6e737b;opacity:.75"></div><div class="a" style="left:612.39px;top:145.50px;width:1.61px;height:1.0px;background:#6e737b;opacity:.75"></div><div class="a" style="left:599.00px;top:147.20px;width:6.07px;height:1.0px;background:#9da2aa;opacity:.75"></div><div class="a" style="left:606.17px;top:147.20px;width:6.83px;height:1.0px;background:#9da2aa;opacity:.75"></div><div class="a" style="left:599.00px;top:148.80px;width:7.83px;height:1.0px;background:#9da2aa;opacity:.75"></div><div class="a" style="left:607.93px;top:148.80px;width:8.12px;height:1.0px;background:#9da2aa;opacity:.75"></div><div class="a" style="left:599.00px;top:150.40px;width:4.31px;height:1.0px;background:#9da2aa;opacity:.75"></div><div class="a" style="left:604.41px;top:150.40px;width:5.20px;height:1.0px;background:#9da2aa;opacity:.75"></div><div class="a" style="left:610.71px;top:150.40px;width:1.29px;height:1.0px;background:#9da2aa;opacity:.75"></div><div class="a" style="left:599.0px;top:153.50px;width:3.0px;height:1.0px;background:#9da2aa;opacity:.75"></div><div class="a" style="left:603.0px;top:153.50px;width:14.0px;height:1.0px;background:#5aa8dc;opacity:.75"></div><div class="a" style="left:599.0px;top:156.00px;width:10.0px;height:1.0px;background:#6e737b;opacity:.75"></div><div class="a" style="left:599.00px;top:157.70px;width:8.25px;height:1.2px;background:#55595f;opacity:.75"></div><div class="a" style="left:608.35px;top:157.70px;width:8.73px;height:1.2px;background:#55595f;opacity:.75"></div><div class="a" style="left:618.17px;top:157.70px;width:3.48px;height:1.2px;background:#55595f;opacity:.75"></div><div class="a" style="left:622.75px;top:157.70px;width:3.65px;height:1.2px;background:#55595f;opacity:.75"></div><div class="a" style="left:627.50px;top:157.70px;width:1.50px;height:1.2px;background:#55595f;opacity:.75"></div><div class="a" style="left:599.00px;top:159.20px;width:4.02px;height:1.2px;background:#55595f;opacity:.75"></div><div class="a" style="left:604.12px;top:159.20px;width:5.65px;height:1.2px;background:#55595f;opacity:.75"></div><div class="a" style="left:610.87px;top:159.20px;width:6.33px;height:1.2px;background:#55595f;opacity:.75"></div><div class="a" style="left:618.30px;top:159.20px;width:4.21px;height:1.2px;background:#55595f;opacity:.75"></div><div class="a" style="left:623.61px;top:159.20px;width:2.53px;height:1.2px;background:#55595f;opacity:.75"></div><div class="a" style="left:627.23px;top:159.20px;width:5.22px;height:1.2px;background:#55595f;opacity:.75"></div><div class="a" style="left:633.56px;top:159.20px;width:4.90px;height:1.2px;background:#55595f;opacity:.75"></div><div class="a" style="left:639.56px;top:159.20px;width:3.44px;height:1.2px;background:#55595f;opacity:.75"></div><div class="a" style="left:599.0px;top:161.00px;width:2.0px;height:1.0px;background:#6e737b;opacity:.75"></div><div class="a" style="left:599.0px;top:164.00px;width:3.0px;height:1.0px;background:#9da2aa;opacity:.75"></div><div class="a" style="left:603.0px;top:164.00px;width:10.0px;height:1.0px;background:#5aa8dc;opacity:.75"></div><div class="a" style="left:599.00px;top:166.50px;width:8.70px;height:1.0px;background:#9da2aa;opacity:.75"></div><div class="a" style="left:608.80px;top:166.50px;width:6.99px;height:1.0px;background:#9da2aa;opacity:.75"></div><div class="a" style="left:616.88px;top:166.50px;width:3.12px;height:1.0px;background:#9da2aa;opacity:.75"></div><div class="a" style="left:599.00px;top:168.50px;width:6.51px;height:1.0px;background:#9da2aa;opacity:.75"></div><div class="a" style="left:606.61px;top:168.50px;width:6.90px;height:1.0px;background:#9da2aa;opacity:.75"></div><div class="a" style="left:614.61px;top:168.50px;width:2.85px;height:1.0px;background:#9da2aa;opacity:.75"></div><div class="a" style="left:618.56px;top:168.50px;width:7.44px;height:1.0px;background:#9da2aa;opacity:.75"></div><div class="a" style="left:599.0px;top:171.50px;width:3.0px;height:1.0px;background:#9da2aa;opacity:.75"></div><div class="a" style="left:603.0px;top:171.50px;width:15.0px;height:1.0px;background:#5aa8dc;opacity:.75"></div><div class="a" style="left:599.0px;top:174.50px;width:4.0px;height:1.0px;background:#6e737b;opacity:.75"></div><div class="a" style="left:603.0px;top:174.50px;width:4.0px;height:1.0px;background:#d27ae0;opacity:.75"></div><div class="a" style="left:608.00px;top:174.50px;width:7.57px;height:1.0px;background:#6e737b;opacity:.75"></div><div class="a" style="left:616.67px;top:174.50px;width:8.18px;height:1.0px;background:#6e737b;opacity:.75"></div><div class="a" style="left:625.95px;top:174.50px;width:7.69px;height:1.0px;background:#6e737b;opacity:.75"></div><div class="a" style="left:634.74px;top:174.50px;width:5.05px;height:1.0px;background:#6e737b;opacity:.75"></div><div class="a" style="left:640.89px;top:174.50px;width:2.11px;height:1.0px;background:#6e737b;opacity:.75"></div><div class="a" style="left:599.0px;top:177.50px;width:5.0px;height:1.0px;background:#cfd3d9;opacity:.75"></div><div class="a" style="left:599.0px;top:181.00px;width:2.0px;height:1.0px;background:#5aa8dc;opacity:.75"></div><div class="a" style="left:602.0px;top:181.00px;width:16.0px;height:1.0px;background:#5aa8dc;opacity:.75"></div><div class="a" style="left:599.0px;top:184.00px;width:3.0px;height:1.0px;background:#9da2aa;opacity:.75"></div><div class="a" style="left:603.0px;top:184.00px;width:33.0px;height:1.0px;background:#5aa8dc;opacity:.75"></div><div class="a" style="left:599.00px;top:186.90px;width:3.17px;height:1.2px;background:#55595f;opacity:.75"></div><div class="a" style="left:603.27px;top:186.90px;width:6.62px;height:1.2px;background:#55595f;opacity:.75"></div><div class="a" style="left:611.00px;top:186.90px;width:2.90px;height:1.2px;background:#55595f;opacity:.75"></div><div class="a" style="left:615.00px;top:186.90px;width:2.94px;height:1.2px;background:#55595f;opacity:.75"></div><div class="a" style="left:619.04px;top:186.90px;width:3.86px;height:1.2px;background:#55595f;opacity:.75"></div><div class="a" style="left:624.00px;top:186.90px;width:3.55px;height:1.2px;background:#55595f;opacity:.75"></div><div class="a" style="left:628.65px;top:186.90px;width:4.71px;height:1.2px;background:#55595f;opacity:.75"></div><div class="a" style="left:634.46px;top:186.90px;width:2.84px;height:1.2px;background:#55595f;opacity:.75"></div><div class="a" style="left:638.40px;top:186.90px;width:2.50px;height:1.2px;background:#55595f;opacity:.75"></div><div class="a" style="left:642.00px;top:186.90px;width:3.48px;height:1.2px;background:#55595f;opacity:.75"></div><div class="a" style="left:646.59px;top:186.90px;width:3.16px;height:1.2px;background:#55595f;opacity:.75"></div><div class="a" style="left:650.85px;top:186.90px;width:4.86px;height:1.2px;background:#55595f;opacity:.75"></div><div class="a" style="left:656.81px;top:186.90px;width:2.67px;height:1.2px;background:#55595f;opacity:.75"></div><div class="a" style="left:660.58px;top:186.90px;width:2.42px;height:1.2px;background:#55595f;opacity:.75"></div><div class="a" style="left:599.00px;top:189.90px;width:6.49px;height:1.2px;background:#55595f;opacity:.75"></div><div class="a" style="left:606.59px;top:189.90px;width:3.47px;height:1.2px;background:#55595f;opacity:.75"></div><div class="a" style="left:599.00px;top:191.50px;width:4.14px;height:1.0px;background:#6e737b;opacity:.75"></div><div class="a" style="left:604.24px;top:191.50px;width:4.76px;height:1.0px;background:#6e737b;opacity:.75"></div><div class="a" style="left:610.10px;top:191.50px;width:4.87px;height:1.0px;background:#6e737b;opacity:.75"></div><div class="a" style="left:616.06px;top:191.50px;width:3.30px;height:1.0px;background:#6e737b;opacity:.75"></div><div class="a" style="left:603.00px;top:193.50px;width:8.02px;height:1.0px;background:#6e737b;opacity:.75"></div><div class="a" style="left:612.12px;top:193.50px;width:8.96px;height:1.0px;background:#6e737b;opacity:.75"></div><div class="a" style="left:622.17px;top:193.50px;width:2.83px;height:1.0px;background:#6e737b;opacity:.75"></div><div class="a" style="left:599.0px;top:196.00px;width:2.0px;height:1.0px;background:#6e737b;opacity:.75"></div><div class="a" style="left:599.00px;top:199.00px;width:5.64px;height:1.0px;background:#55595f;opacity:.75"></div><div class="a" style="left:605.74px;top:199.00px;width:3.06px;height:1.0px;background:#55595f;opacity:.75"></div><div class="a" style="left:609.90px;top:199.00px;width:3.16px;height:1.0px;background:#55595f;opacity:.75"></div><div class="a" style="left:614.17px;top:199.00px;width:4.73px;height:1.0px;background:#55595f;opacity:.75"></div><div class="a" style="left:619.99px;top:199.00px;width:4.22px;height:1.0px;background:#55595f;opacity:.75"></div><div class="a" style="left:625.32px;top:199.00px;width:7.89px;height:1.0px;background:#55595f;opacity:.75"></div><div class="a" style="left:634.30px;top:199.00px;width:2.70px;height:1.0px;background:#55595f;opacity:.75"></div><div class="a" style="left:599.00px;top:200.50px;width:2.65px;height:1.0px;background:#6e737b;opacity:.75"></div><div class="a" style="left:602.75px;top:200.50px;width:8.68px;height:1.0px;background:#6e737b;opacity:.75"></div><div class="a" style="left:612.53px;top:200.50px;width:5.93px;height:1.0px;background:#6e737b;opacity:.75"></div><div class="a" style="left:619.57px;top:200.50px;width:3.45px;height:1.0px;background:#6e737b;opacity:.75"></div><div class="a" style="left:624.12px;top:200.50px;width:6.03px;height:1.0px;background:#6e737b;opacity:.75"></div><div class="a" style="left:631.25px;top:200.50px;width:2.68px;height:1.0px;background:#6e737b;opacity:.75"></div><div class="a" style="left:635.02px;top:200.50px;width:5.93px;height:1.0px;background:#6e737b;opacity:.75"></div><div class="a" style="left:599.0px;top:202.00px;width:2.0px;height:1.0px;background:#6e737b;opacity:.75"></div><div class="a" style="left:599.0px;top:205.50px;width:9.0px;height:1.0px;background:#55595f;opacity:.75"></div><div class="a" style="left:599.00px;top:207.50px;width:8.86px;height:1.0px;background:#55595f;opacity:.75"></div><div class="a" style="left:608.96px;top:207.50px;width:5.04px;height:1.0px;background:#55595f;opacity:.75"></div><div class="a" style="left:603.0px;top:209.50px;width:8.0px;height:1.0px;background:#6e737b;opacity:.75"></div><div class="a" style="left:605.0px;top:211.00px;width:4.0px;height:1.0px;background:#6e737b;opacity:.75"></div><div class="a" style="left:603.00px;top:212.50px;width:7.03px;height:1.0px;background:#6e737b;opacity:.75"></div><div class="a" style="left:611.13px;top:212.50px;width:4.20px;height:1.0px;background:#6e737b;opacity:.75"></div><div class="a" style="left:616.42px;top:212.50px;width:4.88px;height:1.0px;background:#6e737b;opacity:.75"></div><div class="a" style="left:622.41px;top:212.50px;width:3.59px;height:1.0px;background:#6e737b;opacity:.75"></div><div class="a" style="left:627.09px;top:212.50px;width:7.52px;height:1.0px;background:#6e737b;opacity:.75"></div><div class="a" style="left:635.71px;top:212.50px;width:5.29px;height:1.0px;background:#6e737b;opacity:.75"></div><div class="a" style="left:599.00px;top:216.00px;width:7.56px;height:1.0px;background:#55595f;opacity:.75"></div><div class="a" style="left:607.66px;top:216.00px;width:4.64px;height:1.0px;background:#55595f;opacity:.75"></div><div class="a" style="left:613.41px;top:216.00px;width:3.95px;height:1.0px;background:#55595f;opacity:.75"></div><div class="a" style="left:618.46px;top:216.00px;width:7.77px;height:1.0px;background:#55595f;opacity:.75"></div><div class="a" style="left:627.33px;top:216.00px;width:8.67px;height:1.0px;background:#55595f;opacity:.75"></div><div class="a" style="left:599.0px;top:217.50px;width:2.0px;height:1.0px;background:#6e737b;opacity:.75"></div><div class="a" style="left:599.00px;top:220.40px;width:8.04px;height:1.2px;background:#55595f;opacity:.75"></div><div class="a" style="left:608.14px;top:220.40px;width:2.86px;height:1.2px;background:#55595f;opacity:.75"></div><div class="a" style="left:599.00px;top:222.10px;width:7.82px;height:1.0px;background:#6e737b;opacity:.75"></div><div class="a" style="left:607.92px;top:222.10px;width:6.08px;height:1.0px;background:#6e737b;opacity:.75"></div><div class="a" style="left:603.0px;top:223.70px;width:10.0px;height:1.0px;background:#6e737b;opacity:.75"></div><div class="a" style="left:603.0px;top:225.30px;width:9.0px;height:1.0px;background:#6e737b;opacity:.75"></div><div class="a" style="left:603.00px;top:226.90px;width:3.97px;height:1.0px;background:#6e737b;opacity:.75"></div><div class="a" style="left:608.07px;top:226.90px;width:5.86px;height:1.0px;background:#6e737b;opacity:.75"></div><div class="a" style="left:603.0px;top:228.50px;width:10.0px;height:1.0px;background:#6e737b;opacity:.75"></div><div class="a" style="left:599.0px;top:230.00px;width:2.0px;height:1.0px;background:#6e737b;opacity:.75"></div><div class="a" style="left:599.00px;top:233.00px;width:4.81px;height:1.0px;background:#55595f;opacity:.75"></div><div class="a" style="left:604.91px;top:233.00px;width:2.69px;height:1.0px;background:#55595f;opacity:.75"></div><div class="a" style="left:608.70px;top:233.00px;width:2.68px;height:1.0px;background:#55595f;opacity:.75"></div><div class="a" style="left:612.48px;top:233.00px;width:4.32px;height:1.0px;background:#55595f;opacity:.75"></div><div class="a" style="left:617.90px;top:233.00px;width:4.18px;height:1.0px;background:#55595f;opacity:.75"></div><div class="a" style="left:623.18px;top:233.00px;width:7.00px;height:1.0px;background:#55595f;opacity:.75"></div><div class="a" style="left:631.28px;top:233.00px;width:8.72px;height:1.0px;background:#55595f;opacity:.75"></div><div class="a" style="left:641.10px;top:233.00px;width:4.90px;height:1.0px;background:#55595f;opacity:.75"></div><div class="a" style="left:603.00px;top:234.50px;width:8.59px;height:1.0px;background:#6e737b;opacity:.75"></div><div class="a" style="left:612.69px;top:234.50px;width:6.31px;height:1.0px;background:#6e737b;opacity:.75"></div><div class="a" style="left:603.00px;top:236.00px;width:8.71px;height:1.0px;background:#6e737b;opacity:.75"></div><div class="a" style="left:612.81px;top:236.00px;width:4.87px;height:1.0px;background:#6e737b;opacity:.75"></div><div class="a" style="left:603.0px;top:237.50px;width:7.0px;height:1.0px;background:#6e737b;opacity:.75"></div><div class="a" style="left:599.0px;top:241.00px;width:2.0px;height:1.0px;background:#55595f;opacity:.75"></div><div class="a" style="left:599.0px;top:245.00px;width:3.0px;height:1.0px;background:#9da2aa;opacity:.75"></div><div class="a" style="left:603.0px;top:245.00px;width:15.0px;height:1.0px;background:#5aa8dc;opacity:.75"></div><div class="a" style="left:599.00px;top:248.00px;width:3.93px;height:1.0px;background:#55595f;opacity:.75"></div><div class="a" style="left:604.03px;top:248.00px;width:3.97px;height:1.0px;background:#55595f;opacity:.75"></div><div class="a" style="left:609.11px;top:248.00px;width:3.78px;height:1.0px;background:#55595f;opacity:.75"></div><div class="a" style="left:613.99px;top:248.00px;width:3.83px;height:1.0px;background:#55595f;opacity:.75"></div><div class="a" style="left:618.91px;top:248.00px;width:6.56px;height:1.0px;background:#55595f;opacity:.75"></div><div class="a" style="left:626.57px;top:248.00px;width:8.35px;height:1.0px;background:#55595f;opacity:.75"></div><div class="a" style="left:636.02px;top:248.00px;width:5.98px;height:1.0px;background:#55595f;opacity:.75"></div><div class="a" style="left:599.00px;top:251.00px;width:5.62px;height:1.0px;background:#55595f;opacity:.75"></div><div class="a" style="left:605.72px;top:251.00px;width:6.28px;height:1.0px;background:#55595f;opacity:.75"></div><div class="a" style="left:599.0px;top:254.00px;width:10.0px;height:1.0px;background:#55595f;opacity:.75"></div><div class="a" style="left:599.0px;top:255.70px;width:9.0px;height:1.2px;background:#d27ae0;opacity:.75"></div><div class="a" style="left:603.0px;top:257.20px;width:21.0px;height:1.2px;background:#d27ae0;opacity:.75"></div><div class="a" style="left:603.0px;top:258.80px;width:15.0px;height:1.2px;background:#d27ae0;opacity:.75"></div><div class="a" style="left:603.0px;top:260.30px;width:15.0px;height:1.2px;background:#d27ae0;opacity:.75"></div><div class="a" style="left:603.0px;top:261.80px;width:10.0px;height:1.2px;background:#d27ae0;opacity:.75"></div><div class="a" style="left:603.0px;top:263.40px;width:8.0px;height:1.2px;background:#d27ae0;opacity:.75"></div><div class="a" style="left:599.0px;top:265.00px;width:2.0px;height:1.0px;background:#6e737b;opacity:.75"></div><div class="a" style="left:599.00px;top:268.00px;width:7.70px;height:1.0px;background:#55595f;opacity:.75"></div><div class="a" style="left:607.80px;top:268.00px;width:3.05px;height:1.0px;background:#55595f;opacity:.75"></div><div class="a" style="left:611.95px;top:268.00px;width:6.05px;height:1.0px;background:#55595f;opacity:.75"></div><div class="a" style="left:599.0px;top:271.00px;width:10.0px;height:1.0px;background:#55595f;opacity:.75"></div><div class="a" style="left:599.0px;top:272.40px;width:13.0px;height:1.2px;background:#d27ae0;opacity:.75"></div><div class="a" style="left:603.0px;top:274.00px;width:10.0px;height:1.2px;background:#d27ae0;opacity:.75"></div><div class="a" style="left:614.0px;top:274.10px;width:3.0px;height:1.0px;background:#d27ae0;opacity:.75"></div><div class="a" style="left:603.0px;top:275.50px;width:10.0px;height:1.2px;background:#d27ae0;opacity:.75"></div><div class="a" style="left:614.0px;top:275.60px;width:3.0px;height:1.0px;background:#d27ae0;opacity:.75"></div><div class="a" style="left:603.0px;top:277.00px;width:10.0px;height:1.2px;background:#d27ae0;opacity:.75"></div><div class="a" style="left:614.0px;top:277.10px;width:5.0px;height:1.0px;background:#d27ae0;opacity:.75"></div><div class="a" style="left:603.0px;top:280.10px;width:10.0px;height:1.2px;background:#d27ae0;opacity:.75"></div><div class="a" style="left:614.0px;top:280.20px;width:12.0px;height:1.0px;background:#d27ae0;opacity:.75"></div><div class="a" style="left:603.0px;top:281.60px;width:9.0px;height:1.2px;background:#d27ae0;opacity:.75"></div><div class="a" style="left:613.0px;top:281.70px;width:9.0px;height:1.0px;background:#d27ae0;opacity:.75"></div><div class="a" style="left:603.0px;top:283.10px;width:10.0px;height:1.2px;background:#d27ae0;opacity:.75"></div><div class="a" style="left:614.0px;top:283.20px;width:14.0px;height:1.0px;background:#d27ae0;opacity:.75"></div><div class="a" style="left:603.0px;top:284.60px;width:9.0px;height:1.2px;background:#d27ae0;opacity:.75"></div><div class="a" style="left:613.0px;top:284.70px;width:16.0px;height:1.0px;background:#d27ae0;opacity:.75"></div><div class="a" style="left:603.0px;top:286.20px;width:11.0px;height:1.2px;background:#d27ae0;opacity:.75"></div><div class="a" style="left:615.0px;top:286.30px;width:11.0px;height:1.0px;background:#d27ae0;opacity:.75"></div><div class="a" style="left:603.0px;top:287.70px;width:9.0px;height:1.2px;background:#d27ae0;opacity:.75"></div><div class="a" style="left:613.0px;top:287.80px;width:9.0px;height:1.0px;background:#d27ae0;opacity:.75"></div><div class="a" style="left:599.0px;top:289.50px;width:2.0px;height:1.0px;background:#6e737b;opacity:.75"></div><div class="a" style="left:599.00px;top:292.50px;width:8.41px;height:1.0px;background:#55595f;opacity:.75"></div><div class="a" style="left:608.51px;top:292.50px;width:7.49px;height:1.0px;background:#55595f;opacity:.75"></div><div class="a" style="left:599.0px;top:295.50px;width:10.0px;height:1.0px;background:#55595f;opacity:.75"></div><div class="a" style="left:599.0px;top:297.20px;width:9.0px;height:1.2px;background:#d27ae0;opacity:.75"></div><div class="a" style="left:603.0px;top:298.90px;width:15.0px;height:1.2px;background:#d27ae0;opacity:.75"></div><div class="a" style="left:606.0px;top:300.25px;width:9.0px;height:1.5px;background:#d27ae0;opacity:.75"></div><div class="a" style="left:606.0px;top:301.95px;width:9.0px;height:1.5px;background:#d27ae0;opacity:.75"></div><div class="a" style="left:606.0px;top:303.55px;width:6.0px;height:1.5px;background:#d27ae0;opacity:.75"></div><div class="a" style="left:614.0px;top:303.80px;width:6.0px;height:1.0px;background:#d27ae0;opacity:.75"></div><div class="a" style="left:606.0px;top:305.25px;width:9.0px;height:1.5px;background:#d27ae0;opacity:.75"></div><div class="a" style="left:603.0px;top:309.00px;width:13.0px;height:1.0px;background:#d27ae0;opacity:.75"></div><div class="a" style="left:606.0px;top:310.45px;width:9.0px;height:1.5px;background:#d27ae0;opacity:.75"></div><div class="a" style="left:603.0px;top:315.50px;width:17.0px;height:1.0px;background:#d27ae0;opacity:.75"></div><div class="a" style="left:599.0px;top:317.00px;width:2.0px;height:1.0px;background:#6e737b;opacity:.75"></div><div class="a" style="left:599.0px;top:320.00px;width:3.0px;height:1.0px;background:#9da2aa;opacity:.75"></div><div class="a" style="left:603.0px;top:320.00px;width:27.0px;height:1.0px;background:#5aa8dc;opacity:.75"></div><div class="a" style="left:599.00px;top:323.00px;width:7.38px;height:1.0px;background:#55595f;opacity:.75"></div><div class="a" style="left:607.48px;top:323.00px;width:5.61px;height:1.0px;background:#55595f;opacity:.75"></div><div class="a" style="left:614.18px;top:323.00px;width:3.66px;height:1.0px;background:#55595f;opacity:.75"></div><div class="a" style="left:618.94px;top:323.00px;width:7.63px;height:1.0px;background:#55595f;opacity:.75"></div><div class="a" style="left:599.00px;top:326.50px;width:4.66px;height:1.0px;background:#55595f;opacity:.75"></div><div class="a" style="left:604.76px;top:326.50px;width:7.71px;height:1.0px;background:#55595f;opacity:.75"></div><div class="a" style="left:613.57px;top:326.50px;width:8.82px;height:1.0px;background:#55595f;opacity:.75"></div><div class="a" style="left:623.48px;top:326.50px;width:5.07px;height:1.0px;background:#55595f;opacity:.75"></div><div class="a" style="left:629.66px;top:326.50px;width:5.11px;height:1.0px;background:#55595f;opacity:.75"></div><div class="a" style="left:635.86px;top:326.50px;width:8.65px;height:1.0px;background:#55595f;opacity:.75"></div><div class="a" style="left:645.62px;top:326.50px;width:7.21px;height:1.0px;background:#55595f;opacity:.75"></div><div class="a" style="left:653.93px;top:326.50px;width:3.61px;height:1.0px;background:#55595f;opacity:.75"></div><div class="a" style="left:599.00px;top:329.50px;width:3.33px;height:1.0px;background:#55595f;opacity:.75"></div><div class="a" style="left:603.43px;top:329.50px;width:3.48px;height:1.0px;background:#55595f;opacity:.75"></div><div class="a" style="left:608.01px;top:329.50px;width:4.99px;height:1.0px;background:#55595f;opacity:.75"></div><div class="a" style="left:599.0px;top:329.50px;width:2.0px;height:5.0px;background:#55595f;opacity:.75"></div><div class="a" style="left:601.00px;top:334.00px;width:7.74px;height:1.0px;background:#55595f;opacity:.75"></div><div class="a" style="left:609.84px;top:334.00px;width:3.45px;height:1.0px;background:#55595f;opacity:.75"></div><div class="a" style="left:614.39px;top:334.00px;width:7.87px;height:1.0px;background:#55595f;opacity:.75"></div><div class="a" style="left:623.36px;top:334.00px;width:8.87px;height:1.0px;background:#55595f;opacity:.75"></div><div class="a" style="left:633.34px;top:334.00px;width:6.77px;height:1.0px;background:#55595f;opacity:.75"></div><div class="a" style="left:641.21px;top:334.00px;width:1.79px;height:1.0px;background:#55595f;opacity:.75"></div><div class="a" style="left:599.0px;top:335.50px;width:2.0px;height:5.0px;background:#55595f;opacity:.75"></div><div class="a" style="left:601.00px;top:340.00px;width:6.07px;height:1.0px;background:#55595f;opacity:.75"></div><div class="a" style="left:608.17px;top:340.00px;width:3.35px;height:1.0px;background:#55595f;opacity:.75"></div><div class="a" style="left:612.62px;top:340.00px;width:2.59px;height:1.0px;background:#55595f;opacity:.75"></div><div class="a" style="left:616.31px;top:340.00px;width:8.81px;height:1.0px;background:#55595f;opacity:.75"></div><div class="a" style="left:626.22px;top:340.00px;width:6.72px;height:1.0px;background:#55595f;opacity:.75"></div><div class="a" style="left:634.04px;top:340.00px;width:5.92px;height:1.0px;background:#55595f;opacity:.75"></div><div class="a" style="left:641.07px;top:340.00px;width:8.57px;height:1.0px;background:#55595f;opacity:.75"></div><div class="a" style="left:599.0px;top:344.25px;width:14.0px;height:1.5px;background:#5aa8dc;opacity:.75"></div><div class="a" style="left:599.0px;top:346.50px;width:8.0px;height:1.0px;background:#5aa8dc;opacity:.75"></div><div class="a" style="left:599.0px;top:348.25px;width:14.0px;height:1.5px;background:#5aa8dc;opacity:.75"></div><div class="a" style="left:599.0px;top:350.50px;width:12.0px;height:1.0px;background:#5aa8dc;opacity:.75"></div><div class="a" style="left:599.0px;top:352.25px;width:14.0px;height:1.5px;background:#5aa8dc;opacity:.75"></div><div class="a" style="left:599.0px;top:354.50px;width:10.0px;height:1.0px;background:#5aa8dc;opacity:.75"></div><div class="a" style="left:599.0px;top:356.25px;width:12.0px;height:1.5px;background:#5aa8dc;opacity:.75"></div><div class="a" style="left:599.00px;top:359.50px;width:5.32px;height:1.0px;background:#55595f;opacity:.75"></div><div class="a" style="left:605.42px;top:359.50px;width:7.58px;height:1.0px;background:#55595f;opacity:.75"></div><div class="a" style="left:599.0px;top:361.00px;width:3.0px;height:1.0px;background:#55595f;opacity:.75"></div><div class="a" style="left:599.0px;top:362.50px;width:9.0px;height:1.0px;background:#55595f;opacity:.75"></div><div class="a" style="left:599.00px;top:364.00px;width:7.87px;height:1.0px;background:#55595f;opacity:.75"></div><div class="a" style="left:607.97px;top:364.00px;width:3.87px;height:1.0px;background:#55595f;opacity:.75"></div><div class="a" style="left:599.0px;top:365.50px;width:2.0px;height:1.0px;background:#55595f;opacity:.75"></div><div class="a" style="left:599.0px;top:369.50px;width:3.0px;height:1.0px;background:#9da2aa;opacity:.75"></div><div class="a" style="left:603.0px;top:369.50px;width:7.0px;height:1.0px;background:#5aa8dc;opacity:.75"></div><div class="a" style="left:599.00px;top:372.50px;width:4.14px;height:1.0px;background:#55595f;opacity:.75"></div><div class="a" style="left:604.24px;top:372.50px;width:4.40px;height:1.0px;background:#55595f;opacity:.75"></div><div class="a" style="left:609.74px;top:372.50px;width:4.06px;height:1.0px;background:#55595f;opacity:.75"></div><div class="a" style="left:614.90px;top:372.50px;width:6.31px;height:1.0px;background:#55595f;opacity:.75"></div><div class="a" style="left:622.32px;top:372.50px;width:4.19px;height:1.0px;background:#55595f;opacity:.75"></div><div class="a" style="left:627.60px;top:372.50px;width:5.22px;height:1.0px;background:#55595f;opacity:.75"></div><div class="a" style="left:633.93px;top:372.50px;width:3.35px;height:1.0px;background:#55595f;opacity:.75"></div><div class="a" style="left:638.38px;top:372.50px;width:4.62px;height:1.0px;background:#55595f;opacity:.75"></div><div class="a" style="left:599.00px;top:375.50px;width:4.80px;height:1.0px;background:#9da2aa;opacity:.75"></div><div class="a" style="left:604.90px;top:375.50px;width:5.48px;height:1.0px;background:#9da2aa;opacity:.75"></div><div class="a" style="left:611.48px;top:375.50px;width:6.29px;height:1.0px;background:#9da2aa;opacity:.75"></div><div class="a" style="left:618.87px;top:375.50px;width:8.38px;height:1.0px;background:#9da2aa;opacity:.75"></div><div class="a" style="left:628.35px;top:375.50px;width:5.23px;height:1.0px;background:#9da2aa;opacity:.75"></div><div class="a" style="left:634.68px;top:375.50px;width:8.47px;height:1.0px;background:#9da2aa;opacity:.75"></div><div class="a" style="left:644.25px;top:375.50px;width:5.76px;height:1.0px;background:#9da2aa;opacity:.75"></div><div class="a" style="left:651.11px;top:375.50px;width:5.96px;height:1.0px;background:#9da2aa;opacity:.75"></div><div class="a" style="left:658.16px;top:375.50px;width:5.90px;height:1.0px;background:#9da2aa;opacity:.75"></div><div class="a" style="left:665.17px;top:375.50px;width:1.83px;height:1.0px;background:#9da2aa;opacity:.75"></div><div class="a" style="left:599.00px;top:378.50px;width:5.36px;height:1.0px;background:#9da2aa;opacity:.75"></div><div class="a" style="left:605.46px;top:378.50px;width:3.69px;height:1.0px;background:#9da2aa;opacity:.75"></div><div class="a" style="left:610.25px;top:378.50px;width:2.53px;height:1.0px;background:#9da2aa;opacity:.75"></div><div class="a" style="left:613.88px;top:378.50px;width:7.69px;height:1.0px;background:#9da2aa;opacity:.75"></div><div class="a" style="left:622.67px;top:378.50px;width:3.62px;height:1.0px;background:#9da2aa;opacity:.75"></div><div class="a" style="left:627.39px;top:378.50px;width:5.58px;height:1.0px;background:#9da2aa;opacity:.75"></div><div class="a" style="left:634.07px;top:378.50px;width:7.21px;height:1.0px;background:#9da2aa;opacity:.75"></div><div class="a" style="left:642.38px;top:378.50px;width:6.12px;height:1.0px;background:#9da2aa;opacity:.75"></div><div class="a" style="left:649.60px;top:378.50px;width:2.40px;height:1.0px;background:#9da2aa;opacity:.75"></div><div class="a" style="left:599.00px;top:381.50px;width:5.87px;height:1.0px;background:#9da2aa;opacity:.75"></div><div class="a" style="left:605.97px;top:381.50px;width:6.11px;height:1.0px;background:#9da2aa;opacity:.75"></div><div class="a" style="left:613.18px;top:381.50px;width:7.60px;height:1.0px;background:#9da2aa;opacity:.75"></div><div class="a" style="left:621.88px;top:381.50px;width:3.19px;height:1.0px;background:#9da2aa;opacity:.75"></div><div class="a" style="left:626.17px;top:381.50px;width:6.14px;height:1.0px;background:#9da2aa;opacity:.75"></div><div class="a" style="left:633.41px;top:381.50px;width:4.12px;height:1.0px;background:#9da2aa;opacity:.75"></div><div class="a" style="left:638.62px;top:381.50px;width:4.30px;height:1.0px;background:#9da2aa;opacity:.75"></div><div class="a" style="left:644.02px;top:381.50px;width:7.52px;height:1.0px;background:#9da2aa;opacity:.75"></div><div class="a" style="left:652.64px;top:381.50px;width:2.36px;height:1.0px;background:#9da2aa;opacity:.75"></div><div class="a" style="left:599.00px;top:384.50px;width:6.15px;height:1.0px;background:#9da2aa;opacity:.75"></div><div class="a" style="left:606.25px;top:384.50px;width:7.44px;height:1.0px;background:#9da2aa;opacity:.75"></div><div class="a" style="left:614.79px;top:384.50px;width:8.43px;height:1.0px;background:#9da2aa;opacity:.75"></div><div class="a" style="left:624.32px;top:384.50px;width:5.38px;height:1.0px;background:#9da2aa;opacity:.75"></div><div class="a" style="left:630.80px;top:384.50px;width:6.48px;height:1.0px;background:#9da2aa;opacity:.75"></div><div class="a" style="left:638.38px;top:384.50px;width:5.79px;height:1.0px;background:#9da2aa;opacity:.75"></div><div class="a" style="left:645.27px;top:384.50px;width:5.83px;height:1.0px;background:#9da2aa;opacity:.75"></div><div class="a" style="left:599.00px;top:387.50px;width:7.00px;height:1.0px;background:#9da2aa;opacity:.75"></div><div class="a" style="left:607.10px;top:387.50px;width:5.44px;height:1.0px;background:#9da2aa;opacity:.75"></div><div class="a" style="left:613.64px;top:387.50px;width:5.97px;height:1.0px;background:#9da2aa;opacity:.75"></div><div class="a" style="left:620.71px;top:387.50px;width:5.61px;height:1.0px;background:#9da2aa;opacity:.75"></div><div class="a" style="left:627.42px;top:387.50px;width:8.62px;height:1.0px;background:#9da2aa;opacity:.75"></div><div class="a" style="left:637.14px;top:387.50px;width:7.04px;height:1.0px;background:#9da2aa;opacity:.75"></div><div class="a" style="left:645.28px;top:387.50px;width:8.20px;height:1.0px;background:#9da2aa;opacity:.75"></div><div class="a" style="left:654.58px;top:387.50px;width:6.42px;height:1.0px;background:#9da2aa;opacity:.75"></div><div class="a" style="left:599.0px;top:390.50px;width:3.0px;height:1.0px;background:#d27ae0;opacity:.75"></div><div class="a" style="left:603.0px;top:390.50px;width:6.0px;height:1.0px;background:#5aa8dc;opacity:.75"></div><div class="a" style="left:599.00px;top:393.50px;width:4.19px;height:1.0px;background:#9da2aa;opacity:.75"></div><div class="a" style="left:604.29px;top:393.50px;width:6.14px;height:1.0px;background:#9da2aa;opacity:.75"></div><div class="a" style="left:611.52px;top:393.50px;width:8.63px;height:1.0px;background:#9da2aa;opacity:.75"></div><div class="a" style="left:621.26px;top:393.50px;width:7.96px;height:1.0px;background:#9da2aa;opacity:.75"></div><div class="a" style="left:630.32px;top:393.50px;width:1.68px;height:1.0px;background:#9da2aa;opacity:.75"></div><div class="a" style="left:599.00px;top:396.50px;width:3.29px;height:1.0px;background:#9da2aa;opacity:.75"></div><div class="a" style="left:603.39px;top:396.50px;width:5.37px;height:1.0px;background:#9da2aa;opacity:.75"></div><div class="a" style="left:609.86px;top:396.50px;width:2.97px;height:1.0px;background:#9da2aa;opacity:.75"></div><div class="a" style="left:613.94px;top:396.50px;width:4.06px;height:1.0px;background:#9da2aa;opacity:.75"></div><div class="a" style="left:619.10px;top:396.50px;width:2.98px;height:1.0px;background:#9da2aa;opacity:.75"></div><div class="a" style="left:623.18px;top:396.50px;width:6.85px;height:1.0px;background:#9da2aa;opacity:.75"></div><div class="a" style="left:631.13px;top:396.50px;width:4.87px;height:1.0px;background:#9da2aa;opacity:.75"></div><div class="a" style="left:599.00px;top:398.00px;width:8.33px;height:1.0px;background:#9da2aa;opacity:.75"></div><div class="a" style="left:608.43px;top:398.00px;width:3.50px;height:1.0px;background:#9da2aa;opacity:.75"></div><div class="a" style="left:613.03px;top:398.00px;width:7.15px;height:1.0px;background:#9da2aa;opacity:.75"></div><div class="a" style="left:621.29px;top:398.00px;width:2.71px;height:1.0px;background:#9da2aa;opacity:.75"></div><div class="a" style="left:624.0px;top:397.75px;width:8.0px;height:1.5px;background:#d27ae0;opacity:.75"></div><div class="a" style="left:599.00px;top:399.50px;width:3.43px;height:1.0px;background:#9da2aa;opacity:.75"></div><div class="a" style="left:603.53px;top:399.50px;width:8.24px;height:1.0px;background:#9da2aa;opacity:.75"></div><div class="a" style="left:612.87px;top:399.50px;width:8.79px;height:1.0px;background:#9da2aa;opacity:.75"></div><div class="a" style="left:622.76px;top:399.50px;width:1.24px;height:1.0px;background:#9da2aa;opacity:.75"></div><div class="a" style="left:624.0px;top:399.25px;width:8.0px;height:1.5px;background:#d27ae0;opacity:.75"></div><div class="a" style="left:599.00px;top:401.00px;width:8.69px;height:1.0px;background:#9da2aa;opacity:.75"></div><div class="a" style="left:608.79px;top:401.00px;width:5.09px;height:1.0px;background:#9da2aa;opacity:.75"></div><div class="a" style="left:614.98px;top:401.00px;width:5.67px;height:1.0px;background:#9da2aa;opacity:.75"></div><div class="a" style="left:621.75px;top:401.00px;width:8.93px;height:1.0px;background:#9da2aa;opacity:.75"></div><div class="a" style="left:631.78px;top:401.00px;width:7.91px;height:1.0px;background:#9da2aa;opacity:.75"></div><div class="a" style="left:599.00px;top:402.50px;width:3.55px;height:1.0px;background:#9da2aa;opacity:.75"></div><div class="a" style="left:603.65px;top:402.50px;width:5.30px;height:1.0px;background:#9da2aa;opacity:.75"></div><div class="a" style="left:610.05px;top:402.50px;width:5.85px;height:1.0px;background:#9da2aa;opacity:.75"></div><div class="a" style="left:617.01px;top:402.50px;width:4.70px;height:1.0px;background:#9da2aa;opacity:.75"></div><div class="a" style="left:622.81px;top:402.50px;width:3.77px;height:1.0px;background:#9da2aa;opacity:.75"></div><div class="a" style="left:627.68px;top:402.50px;width:4.57px;height:1.0px;background:#9da2aa;opacity:.75"></div><div class="a" style="left:633.35px;top:402.50px;width:6.65px;height:1.0px;background:#9da2aa;opacity:.75"></div><div class="a" style="left:599.0px;top:407.50px;width:11.0px;height:1.0px;background:#cfd3d9;opacity:.75"></div><div class="a" style="left:599.0px;top:411.00px;width:2.0px;height:1.0px;background:#5aa8dc;opacity:.75"></div><div class="a" style="left:603.0px;top:411.00px;width:12.0px;height:1.0px;background:#5aa8dc;opacity:.75"></div><div class="a" style="left:599.00px;top:414.00px;width:2.63px;height:1.0px;background:#55595f;opacity:.75"></div><div class="a" style="left:602.73px;top:414.00px;width:6.10px;height:1.0px;background:#55595f;opacity:.75"></div><div class="a" style="left:609.93px;top:414.00px;width:5.36px;height:1.0px;background:#55595f;opacity:.75"></div><div class="a" style="left:616.39px;top:414.00px;width:2.62px;height:1.0px;background:#55595f;opacity:.75"></div><div class="a" style="left:620.11px;top:414.00px;width:4.65px;height:1.0px;background:#55595f;opacity:.75"></div><div class="a" style="left:625.86px;top:414.00px;width:6.56px;height:1.0px;background:#55595f;opacity:.75"></div><div class="a" style="left:633.52px;top:414.00px;width:4.48px;height:1.0px;background:#55595f;opacity:.75"></div><div class="a" style="left:599.00px;top:416.50px;width:2.92px;height:1.0px;background:#9da2aa;opacity:.75"></div><div class="a" style="left:603.02px;top:416.50px;width:8.90px;height:1.0px;background:#9da2aa;opacity:.75"></div><div class="a" style="left:613.02px;top:416.50px;width:7.62px;height:1.0px;background:#9da2aa;opacity:.75"></div><div class="a" style="left:621.75px;top:416.50px;width:8.82px;height:1.0px;background:#9da2aa;opacity:.75"></div><div class="a" style="left:599.0px;top:418.00px;width:63.0px;height:1.0px;background:#cfd3d9;opacity:.75"></div><div class="a" style="left:599.0px;top:419.50px;width:56.0px;height:1.0px;background:#cfd3d9;opacity:.75"></div><div class="a" style="left:599.0px;top:421.00px;width:61.0px;height:1.0px;background:#cfd3d9;opacity:.75"></div><div class="a" style="left:599.0px;top:422.50px;width:41.0px;height:1.0px;background:#cfd3d9;opacity:.75"></div><div class="a" style="left:599.00px;top:426.00px;width:3.18px;height:1.0px;background:#6e737b;opacity:.75"></div><div class="a" style="left:603.28px;top:426.00px;width:4.23px;height:1.0px;background:#6e737b;opacity:.75"></div><div class="a" style="left:608.61px;top:426.00px;width:2.76px;height:1.0px;background:#6e737b;opacity:.75"></div><div class="a" style="left:612.46px;top:426.00px;width:7.56px;height:1.0px;background:#6e737b;opacity:.75"></div><div class="a" style="left:621.13px;top:426.00px;width:4.26px;height:1.0px;background:#6e737b;opacity:.75"></div><div class="a" style="left:626.49px;top:426.00px;width:3.34px;height:1.0px;background:#6e737b;opacity:.75"></div><div class="a" style="left:630.93px;top:426.00px;width:5.24px;height:1.0px;background:#6e737b;opacity:.75"></div><div class="a" style="left:637.27px;top:426.00px;width:8.42px;height:1.0px;background:#6e737b;opacity:.75"></div><div class="a" style="left:646.80px;top:426.00px;width:4.20px;height:1.0px;background:#6e737b;opacity:.75"></div><div class="a" style="left:599.0px;top:429.00px;width:5.0px;height:1.0px;background:#cfd3d9;opacity:.75"></div><div class="a" style="left:599.0px;top:432.50px;width:2.0px;height:1.0px;background:#9da2aa;opacity:.75"></div><div class="a" style="left:603.0px;top:432.50px;width:8.0px;height:1.0px;background:#5aa8dc;opacity:.75"></div><div class="a" style="left:599.0px;top:435.50px;width:3.0px;height:1.0px;background:#9da2aa;opacity:.75"></div><div class="a" style="left:603.0px;top:435.50px;width:18.0px;height:1.0px;background:#5aa8dc;opacity:.75"></div><div class="a" style="left:599.00px;top:438.50px;width:4.18px;height:1.0px;background:#6e737b;opacity:.75"></div><div class="a" style="left:604.28px;top:438.50px;width:3.47px;height:1.0px;background:#6e737b;opacity:.75"></div><div class="a" style="left:608.85px;top:438.50px;width:8.47px;height:1.0px;background:#6e737b;opacity:.75"></div><div class="a" style="left:618.43px;top:438.50px;width:6.21px;height:1.0px;background:#6e737b;opacity:.75"></div><div class="a" style="left:625.74px;top:438.50px;width:7.05px;height:1.0px;background:#6e737b;opacity:.75"></div><div class="a" style="left:633.89px;top:438.50px;width:3.08px;height:1.0px;background:#6e737b;opacity:.75"></div><div class="a" style="left:638.07px;top:438.50px;width:2.87px;height:1.0px;background:#6e737b;opacity:.75"></div><div class="a" style="left:642.04px;top:438.50px;width:6.97px;height:1.0px;background:#6e737b;opacity:.75"></div><div class="a" style="left:650.12px;top:438.50px;width:5.26px;height:1.0px;background:#6e737b;opacity:.75"></div><div class="a" style="left:656.48px;top:438.50px;width:2.97px;height:1.0px;background:#6e737b;opacity:.75"></div><div class="a" style="left:660.55px;top:438.50px;width:6.45px;height:1.0px;background:#6e737b;opacity:.75"></div><div class="a" style="left:599.0px;top:441.50px;width:3.0px;height:1.0px;background:#9da2aa;opacity:.75"></div><div class="a" style="left:603.0px;top:441.50px;width:10.0px;height:1.0px;background:#5aa8dc;opacity:.75"></div><div class="a" style="left:599.00px;top:444.50px;width:6.62px;height:1.0px;background:#6e737b;opacity:.75"></div><div class="a" style="left:606.72px;top:444.50px;width:7.71px;height:1.0px;background:#6e737b;opacity:.75"></div><div class="a" style="left:615.53px;top:444.50px;width:3.04px;height:1.0px;background:#6e737b;opacity:.75"></div><div class="a" style="left:619.68px;top:444.50px;width:8.07px;height:1.0px;background:#6e737b;opacity:.75"></div><div class="a" style="left:628.84px;top:444.50px;width:2.93px;height:1.0px;background:#6e737b;opacity:.75"></div><div class="a" style="left:632.88px;top:444.50px;width:8.11px;height:1.0px;background:#6e737b;opacity:.75"></div><div class="a" style="left:642.09px;top:444.50px;width:5.45px;height:1.0px;background:#6e737b;opacity:.75"></div><div class="a" style="left:648.63px;top:444.50px;width:4.70px;height:1.0px;background:#6e737b;opacity:.75"></div><div class="a" style="left:654.44px;top:444.50px;width:6.09px;height:1.0px;background:#6e737b;opacity:.75"></div><div class="a" style="left:661.63px;top:444.50px;width:4.37px;height:1.0px;background:#6e737b;opacity:.75"></div><div class="a" style="left:599.0px;top:447.50px;width:3.0px;height:1.0px;background:#9da2aa;opacity:.75"></div><div class="a" style="left:603.0px;top:447.50px;width:11.0px;height:1.0px;background:#5aa8dc;opacity:.75"></div><div class="a" style="left:599.00px;top:450.50px;width:4.24px;height:1.0px;background:#6e737b;opacity:.75"></div><div class="a" style="left:604.34px;top:450.50px;width:3.34px;height:1.0px;background:#6e737b;opacity:.75"></div><div class="a" style="left:608.78px;top:450.50px;width:5.92px;height:1.0px;background:#6e737b;opacity:.75"></div><div class="a" style="left:615.81px;top:450.50px;width:4.05px;height:1.0px;background:#6e737b;opacity:.75"></div><div class="a" style="left:620.96px;top:450.50px;width:3.21px;height:1.0px;background:#6e737b;opacity:.75"></div><div class="a" style="left:625.27px;top:450.50px;width:3.55px;height:1.0px;background:#6e737b;opacity:.75"></div><div class="a" style="left:629.92px;top:450.50px;width:2.83px;height:1.0px;background:#6e737b;opacity:.75"></div><div class="a" style="left:633.84px;top:450.50px;width:3.81px;height:1.0px;background:#6e737b;opacity:.75"></div><div class="a" style="left:638.76px;top:450.50px;width:4.53px;height:1.0px;background:#6e737b;opacity:.75"></div><div class="a" style="left:644.38px;top:450.50px;width:3.62px;height:1.0px;background:#6e737b;opacity:.75"></div><div class="a" style="left:599.0px;top:453.50px;width:3.0px;height:1.0px;background:#9da2aa;opacity:.75"></div><div class="a" style="left:603.0px;top:453.50px;width:19.0px;height:1.0px;background:#5aa8dc;opacity:.75"></div><div class="a" style="left:599.00px;top:456.50px;width:7.44px;height:1.0px;background:#6e737b;opacity:.75"></div><div class="a" style="left:607.54px;top:456.50px;width:4.38px;height:1.0px;background:#6e737b;opacity:.75"></div><div class="a" style="left:613.02px;top:456.50px;width:5.75px;height:1.0px;background:#6e737b;opacity:.75"></div><div class="a" style="left:619.87px;top:456.50px;width:3.66px;height:1.0px;background:#6e737b;opacity:.75"></div><div class="a" style="left:624.63px;top:456.50px;width:4.76px;height:1.0px;background:#6e737b;opacity:.75"></div><div class="a" style="left:630.48px;top:456.50px;width:2.62px;height:1.0px;background:#6e737b;opacity:.75"></div><div class="a" style="left:634.20px;top:456.50px;width:4.13px;height:1.0px;background:#6e737b;opacity:.75"></div><div class="a" style="left:639.43px;top:456.50px;width:2.60px;height:1.0px;background:#6e737b;opacity:.75"></div><div class="a" style="left:643.13px;top:456.50px;width:7.27px;height:1.0px;background:#6e737b;opacity:.75"></div><div class="a" style="left:651.49px;top:456.50px;width:6.08px;height:1.0px;background:#6e737b;opacity:.75"></div><div class="a" style="left:658.68px;top:456.50px;width:3.73px;height:1.0px;background:#6e737b;opacity:.75"></div><div class="a" style="left:599.0px;top:459.50px;width:3.0px;height:1.0px;background:#9da2aa;opacity:.75"></div><div class="a" style="left:603.0px;top:459.50px;width:8.0px;height:1.0px;background:#5aa8dc;opacity:.75"></div><div class="a" style="left:599.0px;top:462.50px;width:6.0px;height:1.0px;background:#6e737b;opacity:.75"></div><div class="a" style="left:605.0px;top:462.50px;width:4.0px;height:1.0px;background:#d27ae0;opacity:.75"></div><div class="a" style="left:610.00px;top:462.50px;width:5.59px;height:1.0px;background:#6e737b;opacity:.75"></div><div class="a" style="left:616.69px;top:462.50px;width:8.58px;height:1.0px;background:#6e737b;opacity:.75"></div><div class="a" style="left:626.36px;top:462.50px;width:3.19px;height:1.0px;background:#6e737b;opacity:.75"></div><div class="a" style="left:630.65px;top:462.50px;width:7.82px;height:1.0px;background:#6e737b;opacity:.75"></div><div class="a" style="left:639.57px;top:462.50px;width:5.31px;height:1.0px;background:#6e737b;opacity:.75"></div><div class="a" style="left:645.98px;top:462.50px;width:5.72px;height:1.0px;background:#6e737b;opacity:.75"></div><div class="a" style="left:652.80px;top:462.50px;width:7.92px;height:1.0px;background:#6e737b;opacity:.75"></div><div class="a" style="left:661.83px;top:462.50px;width:5.06px;height:1.0px;background:#6e737b;opacity:.75"></div><div class="a" style="left:599.0px;top:465.50px;width:5.0px;height:1.0px;background:#cfd3d9;opacity:.75"></div><div class="a" style="left:599.0px;top:469.00px;width:2.0px;height:1.0px;background:#5aa8dc;opacity:.75"></div><div class="a" style="left:603.0px;top:469.00px;width:15.0px;height:1.0px;background:#5aa8dc;opacity:.75"></div><div class="a" style="left:599.0px;top:472.00px;width:3.0px;height:1.0px;background:#9da2aa;opacity:.75"></div><div class="a" style="left:603.0px;top:472.00px;width:13.0px;height:1.0px;background:#5aa8dc;opacity:.75"></div><div class="a" style="left:599.0px;top:472.00px;width:3.0px;height:1.0px;background:#9da2aa;opacity:.75"></div><div class="a" style="left:603.0px;top:472.00px;width:8.0px;height:1.0px;background:#5aa8dc;opacity:.75"></div><div class="a" style="left:599.00px;top:475.00px;width:5.79px;height:1.0px;background:#9da2aa;opacity:.75"></div><div class="a" style="left:605.89px;top:475.00px;width:6.97px;height:1.0px;background:#9da2aa;opacity:.75"></div><div class="a" style="left:613.96px;top:475.00px;width:4.04px;height:1.0px;background:#9da2aa;opacity:.75"></div><div class="a" style="left:600.0px;top:476.45px;width:7.0px;height:1.3px;background:#d27ae0;opacity:.75"></div><div class="a" style="left:609.00px;top:476.60px;width:4.73px;height:1.0px;background:#9da2aa;opacity:.75"></div><div class="a" style="left:614.83px;top:476.60px;width:7.91px;height:1.0px;background:#9da2aa;opacity:.75"></div><div class="a" style="left:600.0px;top:478.05px;width:7.0px;height:1.3px;background:#d27ae0;opacity:.75"></div><div class="a" style="left:609.00px;top:478.20px;width:7.09px;height:1.0px;background:#9da2aa;opacity:.75"></div><div class="a" style="left:617.19px;top:478.20px;width:6.63px;height:1.0px;background:#9da2aa;opacity:.75"></div><div class="a" style="left:624.93px;top:478.20px;width:2.07px;height:1.0px;background:#9da2aa;opacity:.75"></div><div class="a" style="left:600.0px;top:479.65px;width:7.0px;height:1.3px;background:#d27ae0;opacity:.75"></div><div class="a" style="left:609.00px;top:479.80px;width:4.76px;height:1.0px;background:#9da2aa;opacity:.75"></div><div class="a" style="left:614.86px;top:479.80px;width:2.85px;height:1.0px;background:#9da2aa;opacity:.75"></div><div class="a" style="left:618.81px;top:479.80px;width:3.34px;height:1.0px;background:#9da2aa;opacity:.75"></div><div class="a" style="left:623.26px;top:479.80px;width:2.96px;height:1.0px;background:#9da2aa;opacity:.75"></div><div class="a" style="left:627.32px;top:479.80px;width:2.68px;height:1.0px;background:#9da2aa;opacity:.75"></div><div class="a" style="left:600.0px;top:481.25px;width:7.0px;height:1.3px;background:#d27ae0;opacity:.75"></div><div class="a" style="left:609.00px;top:481.40px;width:4.16px;height:1.0px;background:#9da2aa;opacity:.75"></div><div class="a" style="left:614.26px;top:481.40px;width:3.56px;height:1.0px;background:#9da2aa;opacity:.75"></div><div class="a" style="left:618.92px;top:481.40px;width:3.05px;height:1.0px;background:#9da2aa;opacity:.75"></div><div class="a" style="left:623.07px;top:481.40px;width:7.97px;height:1.0px;background:#9da2aa;opacity:.75"></div><div class="a" style="left:599.0px;top:487.00px;width:3.0px;height:1.0px;background:#9da2aa;opacity:.75"></div><div class="a" style="left:603.0px;top:487.00px;width:10.0px;height:1.0px;background:#5aa8dc;opacity:.75"></div><div class="a" style="left:599.00px;top:490.00px;width:8.16px;height:1.0px;background:#9da2aa;opacity:.75"></div><div class="a" style="left:608.26px;top:490.00px;width:6.86px;height:1.0px;background:#9da2aa;opacity:.75"></div><div class="a" style="left:616.22px;top:490.00px;width:1.78px;height:1.0px;background:#9da2aa;opacity:.75"></div><div class="a" style="left:600.0px;top:491.45px;width:7.0px;height:1.3px;background:#d27ae0;opacity:.75"></div><div class="a" style="left:609.00px;top:491.60px;width:4.07px;height:1.0px;background:#9da2aa;opacity:.75"></div><div class="a" style="left:614.17px;top:491.60px;width:4.40px;height:1.0px;background:#9da2aa;opacity:.75"></div><div class="a" style="left:619.68px;top:491.60px;width:5.49px;height:1.0px;background:#9da2aa;opacity:.75"></div><div class="a" style="left:626.27px;top:491.60px;width:1.73px;height:1.0px;background:#9da2aa;opacity:.75"></div><div class="a" style="left:600.0px;top:493.05px;width:7.0px;height:1.3px;background:#d27ae0;opacity:.75"></div><div class="a" style="left:609.00px;top:493.20px;width:5.40px;height:1.0px;background:#9da2aa;opacity:.75"></div><div class="a" style="left:615.50px;top:493.20px;width:4.21px;height:1.0px;background:#9da2aa;opacity:.75"></div><div class="a" style="left:620.81px;top:493.20px;width:8.75px;height:1.0px;background:#9da2aa;opacity:.75"></div><div class="a" style="left:600.0px;top:494.65px;width:7.0px;height:1.3px;background:#d27ae0;opacity:.75"></div><div class="a" style="left:609.00px;top:494.80px;width:8.82px;height:1.0px;background:#9da2aa;opacity:.75"></div><div class="a" style="left:618.92px;top:494.80px;width:6.06px;height:1.0px;background:#9da2aa;opacity:.75"></div><div class="a" style="left:626.08px;top:494.80px;width:4.09px;height:1.0px;background:#9da2aa;opacity:.75"></div><div class="a" style="left:631.27px;top:494.80px;width:2.73px;height:1.0px;background:#9da2aa;opacity:.75"></div><div class="a" style="left:600.0px;top:496.25px;width:7.0px;height:1.3px;background:#d27ae0;opacity:.75"></div><div class="a" style="left:609.00px;top:496.40px;width:4.51px;height:1.0px;background:#9da2aa;opacity:.75"></div><div class="a" style="left:614.61px;top:496.40px;width:4.82px;height:1.0px;background:#9da2aa;opacity:.75"></div><div class="a" style="left:620.53px;top:496.40px;width:2.51px;height:1.0px;background:#9da2aa;opacity:.75"></div><div class="a" style="left:624.14px;top:496.40px;width:4.98px;height:1.0px;background:#9da2aa;opacity:.75"></div><div class="a" style="left:630.22px;top:496.40px;width:5.59px;height:1.0px;background:#9da2aa;opacity:.75"></div><div class="a" style="left:599.0px;top:500.50px;width:3.0px;height:1.0px;background:#9da2aa;opacity:.75"></div><div class="a" style="left:603.0px;top:500.50px;width:12.0px;height:1.0px;background:#5aa8dc;opacity:.75"></div><div class="a" style="left:599.00px;top:503.50px;width:5.77px;height:1.0px;background:#9da2aa;opacity:.75"></div><div class="a" style="left:605.87px;top:503.50px;width:3.81px;height:1.0px;background:#9da2aa;opacity:.75"></div><div class="a" style="left:610.77px;top:503.50px;width:5.78px;height:1.0px;background:#9da2aa;opacity:.75"></div><div class="a" style="left:600.0px;top:504.95px;width:14.0px;height:1.3px;background:#d27ae0;opacity:.75"></div><div class="a" style="left:616.0px;top:505.10px;width:8.0px;height:1.0px;background:#9da2aa;opacity:.75"></div><div class="a" style="left:600.0px;top:506.55px;width:14.0px;height:1.3px;background:#d27ae0;opacity:.75"></div><div class="a" style="left:616.00px;top:506.70px;width:2.53px;height:1.0px;background:#9da2aa;opacity:.75"></div><div class="a" style="left:619.63px;top:506.70px;width:4.22px;height:1.0px;background:#9da2aa;opacity:.75"></div><div class="a" style="left:624.95px;top:506.70px;width:2.05px;height:1.0px;background:#9da2aa;opacity:.75"></div><div class="a" style="left:600.0px;top:508.15px;width:14.0px;height:1.3px;background:#d27ae0;opacity:.75"></div><div class="a" style="left:616.00px;top:508.30px;width:5.10px;height:1.0px;background:#9da2aa;opacity:.75"></div><div class="a" style="left:622.20px;top:508.30px;width:2.77px;height:1.0px;background:#9da2aa;opacity:.75"></div><div class="a" style="left:626.07px;top:508.30px;width:2.65px;height:1.0px;background:#9da2aa;opacity:.75"></div><div class="a" style="left:600.0px;top:509.75px;width:14.0px;height:1.3px;background:#d27ae0;opacity:.75"></div><div class="a" style="left:616.00px;top:509.90px;width:4.48px;height:1.0px;background:#9da2aa;opacity:.75"></div><div class="a" style="left:621.58px;top:509.90px;width:4.01px;height:1.0px;background:#9da2aa;opacity:.75"></div><div class="a" style="left:626.69px;top:509.90px;width:6.31px;height:1.0px;background:#9da2aa;opacity:.75"></div><div class="a" style="left:599.0px;top:512.50px;width:3.0px;height:1.0px;background:#9da2aa;opacity:.75"></div><div class="a" style="left:603.0px;top:512.50px;width:14.0px;height:1.0px;background:#5aa8dc;opacity:.75"></div><div class="a" style="left:599.00px;top:515.50px;width:5.94px;height:1.0px;background:#9da2aa;opacity:.75"></div><div class="a" style="left:606.04px;top:515.50px;width:7.38px;height:1.0px;background:#9da2aa;opacity:.75"></div><div class="a" style="left:614.52px;top:515.50px;width:3.48px;height:1.0px;background:#9da2aa;opacity:.75"></div><div class="a" style="left:600.0px;top:516.95px;width:13.0px;height:1.3px;background:#d27ae0;opacity:.75"></div><div class="a" style="left:615.0px;top:517.10px;width:9.0px;height:1.0px;background:#9da2aa;opacity:.75"></div><div class="a" style="left:600.0px;top:518.55px;width:13.0px;height:1.3px;background:#d27ae0;opacity:.75"></div><div class="a" style="left:615.00px;top:518.70px;width:7.15px;height:1.0px;background:#9da2aa;opacity:.75"></div><div class="a" style="left:623.25px;top:518.70px;width:3.75px;height:1.0px;background:#9da2aa;opacity:.75"></div><div class="a" style="left:600.0px;top:520.15px;width:13.0px;height:1.3px;background:#d27ae0;opacity:.75"></div><div class="a" style="left:615.00px;top:520.30px;width:5.03px;height:1.0px;background:#9da2aa;opacity:.75"></div><div class="a" style="left:621.13px;top:520.30px;width:4.62px;height:1.0px;background:#9da2aa;opacity:.75"></div><div class="a" style="left:626.85px;top:520.30px;width:3.15px;height:1.0px;background:#9da2aa;opacity:.75"></div><div class="a" style="left:600.0px;top:521.75px;width:13.0px;height:1.3px;background:#d27ae0;opacity:.75"></div><div class="a" style="left:615.00px;top:521.90px;width:3.47px;height:1.0px;background:#9da2aa;opacity:.75"></div><div class="a" style="left:619.57px;top:521.90px;width:7.21px;height:1.0px;background:#9da2aa;opacity:.75"></div><div class="a" style="left:627.88px;top:521.90px;width:5.12px;height:1.0px;background:#9da2aa;opacity:.75"></div><div class="a" style="left:599.0px;top:524.50px;width:3.0px;height:1.0px;background:#9da2aa;opacity:.75"></div><div class="a" style="left:603.0px;top:524.50px;width:16.0px;height:1.0px;background:#5aa8dc;opacity:.75"></div><div class="a" style="left:599.00px;top:527.50px;width:2.78px;height:1.0px;background:#9da2aa;opacity:.75"></div><div class="a" style="left:602.88px;top:527.50px;width:7.93px;height:1.0px;background:#9da2aa;opacity:.75"></div><div class="a" style="left:611.91px;top:527.50px;width:6.09px;height:1.0px;background:#9da2aa;opacity:.75"></div><div class="a" style="left:600.0px;top:528.95px;width:9.0px;height:1.3px;background:#d27ae0;opacity:.75"></div><div class="a" style="left:611.0px;top:529.10px;width:10.0px;height:1.0px;background:#9da2aa;opacity:.75"></div><div class="a" style="left:600.0px;top:530.55px;width:9.0px;height:1.3px;background:#d27ae0;opacity:.75"></div><div class="a" style="left:611.00px;top:530.70px;width:6.58px;height:1.0px;background:#9da2aa;opacity:.75"></div><div class="a" style="left:618.68px;top:530.70px;width:5.32px;height:1.0px;background:#9da2aa;opacity:.75"></div><div class="a" style="left:600.0px;top:532.15px;width:9.0px;height:1.3px;background:#d27ae0;opacity:.75"></div><div class="a" style="left:611.00px;top:532.30px;width:7.78px;height:1.0px;background:#9da2aa;opacity:.75"></div><div class="a" style="left:619.88px;top:532.30px;width:3.41px;height:1.0px;background:#9da2aa;opacity:.75"></div><div class="a" style="left:624.38px;top:532.30px;width:2.62px;height:1.0px;background:#9da2aa;opacity:.75"></div><div class="a" style="left:600.0px;top:533.75px;width:9.0px;height:1.3px;background:#d27ae0;opacity:.75"></div><div class="a" style="left:611.00px;top:533.90px;width:5.78px;height:1.0px;background:#9da2aa;opacity:.75"></div><div class="a" style="left:617.88px;top:533.90px;width:7.93px;height:1.0px;background:#9da2aa;opacity:.75"></div><div class="a" style="left:626.91px;top:533.90px;width:3.09px;height:1.0px;background:#9da2aa;opacity:.75"></div></div></div>
<div class="a" style="left:667px;top:73.6px;width:1px;height:474.4px;background:#eef0f3;"></div>
<div class="a" style="left:669.3px;top:249px;width:2.8px;height:35.5px;background:#cfd4db;border-radius:1.4px"></div>
<div class="a" style="left:607.6px;top:541px;width:43.4px;height:4.2px;background:#d3d8e0;border-radius:2.1px"></div>
<svg style="left:598px;top:539px" width="70" height="8" viewBox="0 0 70 8"><path d="M5 1.5 L2.5 4 L5 6.5" fill="none" stroke="#c5cad2" stroke-width="1"/><path d="M62.5 1.5 L65 4 L62.5 6.5" fill="none" stroke="#c5cad2" stroke-width="1"/></svg>
<div class="t" style="left:692px;top:81.7px;font-size:12.7px;color:#1f2328;font-weight:bold;font-family:'Liberation Mono',monospace;">Mermaid Diagrams</div>
<div class="t" style="left:692px;top:104px;font-size:10.2px;color:#33373d;font-family:'Liberation Mono',monospace;">Create flowcharts, sequence diagrams, and more:</div>
<div class="t" style="left:692px;top:128.8px;font-size:10px;color:#1f2328;font-weight:bold;font-family:'Liberation Mono',monospace;">Flowchart:</div>
<div class="t" style="left:692px;top:458.2px;font-size:10px;color:#1f2328;font-weight:bold;font-family:'Liberation Mono',monospace;">Sequence Diagram:</div>
<svg style="left:0;top:0" width="1200" height="566" viewBox="0 0 1200 566">
<defs><marker id="ah" viewBox="0 0 10 10" refX="9" refY="5" markerWidth="5.5" markerHeight="5.5" orient="auto"><path d="M0 0 L10 5 L0 10z" fill="#333333"/></marker></defs>
<rect x="905" y="152.2" width="60" height="33.9" fill="#ececff" stroke="#ab9de3" stroke-width="0.9"/>
<path d="M935.1 186.1 L935.1 216" stroke="#333333" stroke-width="0.9" fill="none" marker-end="url(#ah)"/>
<path d="M935.1 217.2 L971.3 253.1 L935.1 289 L899.2 253.1Z" fill="#ececff" stroke="#ab9de3" stroke-width="0.9"/>
<path d="M918 271 L 892 302 C 886 309, 882 313, 882 322 L882 334.5" stroke="#333333" stroke-width="0.9" fill="none" marker-end="url(#ah)"/>
<path d="M952 271 L 978 302 C 984 309, 988 313, 988 322 L988 334.5" stroke="#333333" stroke-width="0.9" fill="none" marker-end="url(#ah)"/>
<rect x="874.5" y="305.5" width="15.3" height="13.4" fill="#e8e8e8" opacity="0.85"/>
<rect x="981.1" y="305.5" width="12.8" height="13.4" fill="#e8e8e8" opacity="0.85"/>
<rect x="844.3" y="335.4" width="75.4" height="33.7" fill="#ececff" stroke="#ab9de3" stroke-width="0.9"/>
<rect x="950.3" y="335.4" width="75.1" height="33.7" fill="#ececff" stroke="#ab9de3" stroke-width="0.9"/>
<path d="M882 369.1 C 882 390, 895 395, 906 399.5" stroke="#333333" stroke-width="0.9" fill="none" marker-end="url(#ah)"/>
<path d="M988 369.1 C 988 390, 975 395, 964 399.5" stroke="#333333" stroke-width="0.9" fill="none" marker-end="url(#ah)"/>
<rect x="907.3" y="400" width="55.4" height="34.4" fill="#ececff" stroke="#ab9de3" stroke-width="0.9"/>
<rect x="762.9" y="481.1" width="94.2" height="40.3" rx="2.5" fill="#eceafc" stroke="#dcd8f2" stroke-width="0.9"/>
<rect x="888.3" y="481.1" width="93.5" height="40.3" rx="2.5" fill="#eceafc" stroke="#dcd8f2" stroke-width="0.9"/>
<rect x="1013" y="481.1" width="93.8" height="40.3" rx="2.5" fill="#eceafc" stroke="#dcd8f2" stroke-width="0.9"/>
<path d="M809.8 521.4 V548 M934.9 521.4 V548 M1059.9 521.4 V548" stroke="#d9d4ef" stroke-width="1.4"/>
</svg>
<div class="a" style="left:0;top:0;width:1200px;height:566px;overflow:hidden"><div class="a" style="left:905px;top:152px;width:41px;height:34px;overflow:hidden"><div class="a" style="left:-905px;top:-152px;width:1200px;height:566px"><div class="t" style="left:924px;top:170.5px;font-size:10.1px;color:#333;font-family:'Liberation Mono',monospace;-webkit-text-stroke:0.25px #333;">Start</div>
</div></div><div class="a" style="left:906px;top:230px;width:48.4px;height:40px;overflow:hidden"><div class="a" style="left:-906px;top:-230px;width:1200px;height:566px"><div class="t" style="left:916.2px;top:253.9px;font-size:10.1px;color:#333;font-family:'Liberation Mono',monospace;-webkit-text-stroke:0.25px #333;">Decision</div>
</div></div><div class="a" style="left:874.5px;top:305px;width:15.3px;height:14px;overflow:hidden"><div class="a" style="left:-874.5px;top:-305px;width:1200px;height:566px"><div class="t" style="left:875px;top:313.3px;font-size:10.1px;color:#333;font-family:'Liberation Mono',monospace;-webkit-text-stroke:0.25px #333;">Yes</div>
</div></div><div class="t" style="left:982px;top:313.3px;font-size:10.1px;color:#333;font-family:'Liberation Mono',monospace;-webkit-text-stroke:0.25px #333;">No</div>
<div class="t" style="left:863.8px;top:353.8px;font-size:10.1px;color:#333;font-family:'Liberation Mono',monospace;-webkit-text-stroke:0.25px #333;">Action</div>
<div class="t" style="left:969.8px;top:353.8px;font-size:10.1px;color:#333;font-family:'Liberation Mono',monospace;-webkit-text-stroke:0.25px #333;">Action</div>
<div class="a" style="left:910px;top:400px;width:32px;height:34px;overflow:hidden"><div class="a" style="left:-910px;top:-400px;width:1200px;height:566px"><div class="t" style="left:926.5px;top:418.5px;font-size:10.1px;color:#333;font-family:'Liberation Mono',monospace;-webkit-text-stroke:0.25px #333;">End</div>
</div></div><div class="t" style="left:797.9px;top:503.3px;font-size:10.2px;color:#333;font-family:'Liberation Mono',monospace;-webkit-text-stroke:0.25px #333;">User</div>
<div class="t" style="left:925.8px;top:503.3px;font-size:10.2px;color:#333;font-family:'Liberation Mono',monospace;-webkit-text-stroke:0.25px #333;">App</div>
<div class="t" style="left:1041.5px;top:503.3px;font-size:10.2px;color:#333;font-family:'Liberation Mono',monospace;-webkit-text-stroke:0.25px #333;">Server</div>
<div class="t" style="left:828.5px;top:541.4px;font-size:10.2px;color:#333;font-family:'Liberation Mono',monospace;-webkit-text-stroke:0.25px #333;">Write Markdown</div>
</div>
<div class="a" style="left:655.1px;top:76.1px;width:17px;height:18.8px;background:#1f9de4;border-radius:3px;box-shadow:0 1px 2px rgba(0,0,0,.15)"></div>
<svg style="left:658.6px;top:80.5px;" width="10" height="10" viewBox="0 0 24 24" fill="none" stroke="#ffffff" stroke-width="2.8" stroke-linecap="round" stroke-linejoin="round"><path d="m15 18-6-6 6-6"/></svg>
<div class="a" style="left:678.9px;top:76.1px;width:16.9px;height:18.8px;background:#1f9de4;border-radius:3px;box-shadow:0 1px 2px rgba(0,0,0,.15)"></div>
<svg style="left:682.3px;top:80.5px;" width="10" height="10" viewBox="0 0 24 24" fill="none" stroke="#ffffff" stroke-width="2.8" stroke-linecap="round" stroke-linejoin="round"><path d="m9 18 6-6-6-6"/></svg>
<div class="a" style="left:1194.9px;top:247.5px;width:3.9px;height:27px;background:#c8cfd9;border-radius:2px"></div>
<svg style="left:1192px;top:74px" width="8" height="474" viewBox="0 0 8 474"><path d="M2.5 5 L4.5 3 L6.5 5Z" fill="#c0c6cf"/><path d="M2.5 468 L4.5 470 L6.5 468Z" fill="#c0c6cf"/></svg>
<div class="t" style="left:7.5px;top:557.8px;font-size:7.1px;color:#4a5260;">Ln 1, Col 1</div>
<div class="t" style="left:52.5px;top:557.8px;font-size:7.4px;color:#4a5260;">1,620 words</div>
<svg style="left:990.8px;top:554px;" width="6.5" height="6.5" viewBox="0 0 24 24" fill="none" stroke="#4a5260" stroke-width="2.6" stroke-linecap="round" stroke-linejoin="round"><path d="M5 12h14"/></svg>
<div class="t" style="left:1007.8px;top:557.9px;font-size:7.1px;color:#4a5260;">100%</div>
<svg style="left:1035.2px;top:553.5px;" width="7.2" height="7.2" viewBox="0 0 24 24" fill="none" stroke="#4a5260" stroke-width="2.4" stroke-linecap="round" stroke-linejoin="round"><path d="M5 12h14"/><path d="M12 5v14"/></svg>
<svg style="left:1060px;top:553.3px;" width="8.2" height="8.2" viewBox="0 0 24 24" fill="none" stroke="#3a9a6a" stroke-width="2.6" stroke-linecap="round" stroke-linejoin="round"><path d="M20 6 9 17l-5-5"/></svg>
<div class="t" style="left:1073px;top:557.9px;font-size:6.9px;color:#3c9b6c;">Synced</div>
<svg style="left:1111.2px;top:553.3px;" width="8.2" height="8.2" viewBox="0 0 24 24" fill="none" stroke="#3a9a6a" stroke-width="2.6" stroke-linecap="round" stroke-linejoin="round"><path d="M20 6 9 17l-5-5"/></svg>
<div class="t" style="left:1121.8px;top:557.9px;font-size:6.9px;color:#3c9b6c;">Synced</div>
<div class="t" style="left:1155px;top:557.9px;font-size:7px;color:#4a5260;">LF</div>
<div class="t" style="left:1172.8px;top:557.9px;font-size:6.9px;color:#4a5260;">UTF-8</div>
<div class="a" style="left:183px;top:23.6px;width:124px;height:174.2px;background:#ffffff;border:1px solid #eceef1;border-radius:3px;box-shadow:0 2px 6px rgba(0,0,0,.08)"></div>
<svg style="left:189.7px;top:33px;" width="10.3" height="10.3" viewBox="0 0 24 24" fill="none" stroke="#9aa0a8" stroke-width="1.8" stroke-linecap="round" stroke-linejoin="round"><rect width="18" height="18" x="3" y="3" rx="2"/><path d="M9 3v18"/></svg>
<div class="t" style="left:207.8px;top:38.2px;font-size:8.85px;color:#3a404a;">Show Editor</div>
<svg style="left:189.7px;top:55.5px;" width="10.3" height="10.3" viewBox="0 0 24 24" fill="none" stroke="#9aa0a8" stroke-width="1.8" stroke-linecap="round" stroke-linejoin="round"><rect width="18" height="18" x="3" y="3" rx="2"/><path d="M12 3v18"/></svg>
<div class="t" style="left:207.8px;top:60.7px;font-size:8.85px;color:#3a404a;">Split View</div>
<svg style="left:189.7px;top:78px;" width="10.3" height="10.3" viewBox="0 0 24 24" fill="none" stroke="#9aa0a8" stroke-width="1.8" stroke-linecap="round" stroke-linejoin="round"><rect width="18" height="18" x="3" y="3" rx="2"/><path d="M15 3v18"/></svg>
<div class="t" style="left:207.8px;top:83px;font-size:8.85px;color:#3a404a;">Show Preview</div>
<div class="a" style="left:183.5px;top:96.7px;width:122px;height:0.8px;background:#eceef1;"></div>
<svg style="left:188.7px;top:104.8px;" width="12.4" height="12.4" viewBox="0 0 24 24" fill="none" stroke="#b0b5bd" stroke-width="1.6" stroke-linecap="round" stroke-linejoin="round"><path d="M5 12h14"/><path d="M12 5v14"/></svg>
<div class="t" style="left:207.8px;top:111.5px;font-size:8.85px;color:#3a404a;">Zoom In (100%)</div>
<div class="t" style="left:278px;top:112.5px;font-size:7.5px;color:#b4b8bf;">Ctrl++</div>
<svg style="left:188.7px;top:127.2px;" width="12.4" height="12.4" viewBox="0 0 24 24" fill="none" stroke="#b0b5bd" stroke-width="1.6" stroke-linecap="round" stroke-linejoin="round"><path d="M5 12h14"/></svg>
<div class="t" style="left:207.8px;top:133.7px;font-size:8.85px;color:#3a404a;">Zoom Out</div>
<div class="t" style="left:279.8px;top:134.7px;font-size:7.5px;color:#b4b8bf;">Ctrl+-</div>
<svg style="left:190px;top:150.5px;" width="10" height="10" viewBox="0 0 24 24" fill="none" stroke="#9aa0a8" stroke-width="1.8" stroke-linecap="round" stroke-linejoin="round"><path d="M3 12a9 9 0 1 0 9-9 9.75 9.75 0 0 0-6.74 2.74L3 8"/><path d="M3 3v5h5"/></svg>
<div class="t" style="left:207.8px;top:156px;font-size:8.85px;color:#3a404a;">Reset Zoom</div>
<div class="t" style="left:277.8px;top:157px;font-size:7.5px;color:#b4b8bf;">Ctrl+0</div>
<div class="a" style="left:183.5px;top:169.7px;width:122px;height:0.8px;background:#eceef1;"></div>
<svg style="left:190px;top:178.7px;" width="10" height="10" viewBox="0 0 24 24" fill="none" stroke="#9aa0a8" stroke-width="1.8" stroke-linecap="round" stroke-linejoin="round"><path d="M15 3h6v6"/><path d="M10 14 21 3"/><path d="M18 13v6a2 2 0 0 1-2 2H5a2 2 0 0 1-2-2V8a2 2 0 0 1 2-2h6"/></svg>
<div class="t" style="left:207.8px;top:184.2px;font-size:8.85px;color:#3a404a;">Open in New Window</div>
</body></html>
